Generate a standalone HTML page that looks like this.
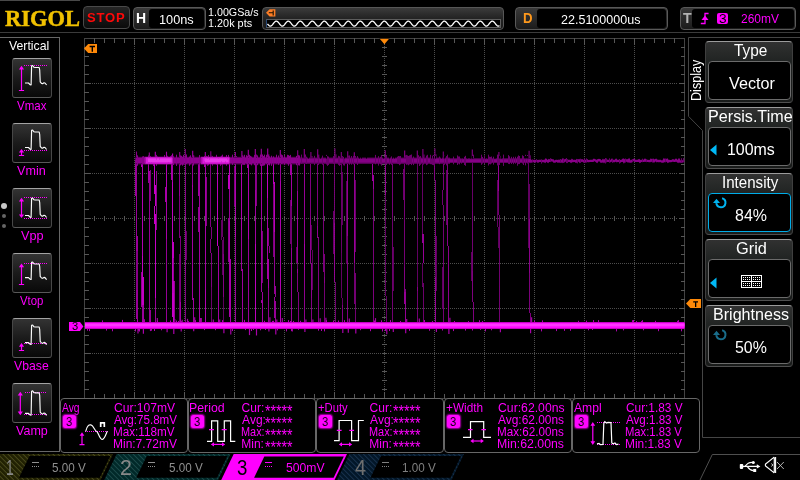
<!DOCTYPE html>
<html><head><meta charset="utf-8"><title>RIGOL</title><style>
html,body{margin:0;padding:0;background:#000;}
body{width:800px;height:480px;overflow:hidden;position:relative;font-family:"Liberation Sans",sans-serif;}
#root{position:absolute;left:0;top:0;width:800px;height:480px;overflow:hidden;will-change:transform;opacity:0.999;}
.a{position:absolute;}
.t{position:absolute;white-space:nowrap;line-height:1;transform-origin:0 0;}
.btn{position:absolute;box-sizing:border-box;border:1px solid #484848;border-top-color:#a4a4a4;border-bottom-color:#5a5a5a;border-radius:3px;background:linear-gradient(#343434,#1c1c1c 50%,#0a0a0a);}
.box{position:absolute;box-sizing:border-box;border:1px solid #5a5a5a;border-radius:4px;background:linear-gradient(#3a3a3a,#1c1c1c);}
.inner{position:absolute;box-sizing:border-box;background:#000;border-radius:3px;}
.mbox{position:absolute;box-sizing:border-box;border:1px solid #686868;border-radius:4px;background:#000;}
.rbtn{position:absolute;box-sizing:border-box;border:1px solid #404040;border-top-color:#9c9c9c;border-bottom-color:#505050;border-radius:4px;background:linear-gradient(#323232 0px,#2a2c2b 9px,#222524 19px,#1a1c1b 100%);}
.rin{position:absolute;box-sizing:border-box;border:1px solid #6c6c6c;border-radius:4px;background:#000;}
</style></head><body>
<div id="root">
<div class="a" style="left:0;top:0;width:80px;height:1px;background:#4a4a4a"></div>
<div class="a" style="left:0;top:32px;width:800px;height:1px;background:#3c3c3c"></div>
<div class="t" style="left:4.65px;top:6px;font-size:24.0px;color:#f2c200;font-weight:bold;font-family:'Liberation Serif',serif;transform:scaleX(0.9361);-webkit-text-stroke:0.5px #f2c200;">RIGOL</div>
<div class="box" style="left:83px;top:6px;width:47px;height:23px;background:linear-gradient(#262626,#0c0c0c);border-color:#4a4a4a"></div>
<div class="t" style="left:87.13px;top:11px;font-size:13.1px;color:#ff0a0a;font-weight:bold;transform:scaleX(0.9977);letter-spacing:0.8px;">STOP</div>
<div class="box" style="left:133px;top:7px;width:73px;height:23px"></div>
<div class="inner" style="left:149px;top:9px;width:55px;height:19px"></div>
<div class="t" style="left:136.06px;top:11px;font-size:14.5px;color:#fff;font-weight:bold;transform:scaleX(0.9623);">H</div>
<div class="t" style="left:159.03px;top:13px;font-size:13.1px;color:#fff;font-weight:normal;transform:scaleX(0.9735);">100ns</div>
<div class="t" style="left:208.19px;top:6px;font-size:11.6px;color:#fff;font-weight:normal;transform:scaleX(0.9248);">1.00GSa/s</div>
<div class="t" style="left:208.18px;top:17px;font-size:11.6px;color:#fff;font-weight:normal;transform:scaleX(0.9368);">1.20k pts</div>
<div class="box" style="left:262px;top:7px;width:242px;height:23px;background:linear-gradient(#3c3c3c,#262626 45%,#1a1a1a);border-color:#585858"></div>
<div class="a" style="left:266px;top:19px;width:235px;height:9px;box-sizing:border-box;background:#000;border:1px solid #5e5e5e;border-left-color:#2a4a78"></div>
<svg class="a" style="left:266px;top:8.5px" width="10" height="8" viewBox="0 0 10 8"><path d="M0 3.8 L3.6 0.3 H9.4 V7.5 H3.6 Z" fill="#ff7f27"/><path d="M2.8 3.8 H7 M7.2 1.4 V6.4" stroke="#1a1000" stroke-width="1.1" fill="none"/></svg>
<svg class="a" style="left:0;top:0" width="800" height="32"><polyline points="267.5,23.86 268.0,24.50 268.5,25.07 269.0,25.54 269.5,25.88 270.0,26.07 270.5,26.09 271.0,25.93 271.5,25.62 272.0,25.17 272.5,24.62 273.0,23.99 273.5,23.34 274.0,22.70 274.5,22.13 275.0,21.66 275.5,21.32 276.0,21.13 276.5,21.11 277.0,21.27 277.5,21.58 278.0,22.03 278.5,22.58 279.0,23.21 279.5,23.86 280.0,24.50 280.5,25.07 281.0,25.54 281.5,25.88 282.0,26.07 282.5,26.09 283.0,25.93 283.5,25.62 284.0,25.17 284.5,24.62 285.0,23.99 285.5,23.34 286.0,22.70 286.5,22.13 287.0,21.66 287.5,21.32 288.0,21.13 288.5,21.11 289.0,21.27 289.5,21.58 290.0,22.03 290.5,22.58 291.0,23.21 291.5,23.86 292.0,24.50 292.5,25.07 293.0,25.54 293.5,25.88 294.0,26.07 294.5,26.09 295.0,25.93 295.5,25.62 296.0,25.17 296.5,24.62 297.0,23.99 297.5,23.34 298.0,22.70 298.5,22.13 299.0,21.66 299.5,21.32 300.0,21.13 300.5,21.11 301.0,21.27 301.5,21.58 302.0,22.03 302.5,22.58 303.0,23.21 303.5,23.86 304.0,24.50 304.5,25.07 305.0,25.54 305.5,25.88 306.0,26.07 306.5,26.09 307.0,25.93 307.5,25.62 308.0,25.17 308.5,24.62 309.0,23.99 309.5,23.34 310.0,22.70 310.5,22.13 311.0,21.66 311.5,21.32 312.0,21.13 312.5,21.11 313.0,21.27 313.5,21.58 314.0,22.03 314.5,22.58 315.0,23.21 315.5,23.86 316.0,24.50 316.5,25.07 317.0,25.54 317.5,25.88 318.0,26.07 318.5,26.09 319.0,25.93 319.5,25.62 320.0,25.17 320.5,24.62 321.0,23.99 321.5,23.34 322.0,22.70 322.5,22.13 323.0,21.66 323.5,21.32 324.0,21.13 324.5,21.11 325.0,21.27 325.5,21.58 326.0,22.03 326.5,22.58 327.0,23.21 327.5,23.86 328.0,24.50 328.5,25.07 329.0,25.54 329.5,25.88 330.0,26.07 330.5,26.09 331.0,25.93 331.5,25.62 332.0,25.17 332.5,24.62 333.0,23.99 333.5,23.34 334.0,22.70 334.5,22.13 335.0,21.66 335.5,21.32 336.0,21.13 336.5,21.11 337.0,21.27 337.5,21.58 338.0,22.03 338.5,22.58 339.0,23.21 339.5,23.86 340.0,24.50 340.5,25.07 341.0,25.54 341.5,25.88 342.0,26.07 342.5,26.09 343.0,25.93 343.5,25.62 344.0,25.17 344.5,24.62 345.0,23.99 345.5,23.34 346.0,22.70 346.5,22.13 347.0,21.66 347.5,21.32 348.0,21.13 348.5,21.11 349.0,21.27 349.5,21.58 350.0,22.03 350.5,22.58 351.0,23.21 351.5,23.86 352.0,24.50 352.5,25.07 353.0,25.54 353.5,25.88 354.0,26.07 354.5,26.09 355.0,25.93 355.5,25.62 356.0,25.17 356.5,24.62 357.0,23.99 357.5,23.34 358.0,22.70 358.5,22.13 359.0,21.66 359.5,21.32 360.0,21.13 360.5,21.11 361.0,21.27 361.5,21.58 362.0,22.03 362.5,22.58 363.0,23.21 363.5,23.86 364.0,24.50 364.5,25.07 365.0,25.54 365.5,25.88 366.0,26.07 366.5,26.09 367.0,25.93 367.5,25.62 368.0,25.17 368.5,24.62 369.0,23.99 369.5,23.34 370.0,22.70 370.5,22.13 371.0,21.66 371.5,21.32 372.0,21.13 372.5,21.11 373.0,21.27 373.5,21.58 374.0,22.03 374.5,22.58 375.0,23.21 375.5,23.86 376.0,24.50 376.5,25.07 377.0,25.54 377.5,25.88 378.0,26.07 378.5,26.09 379.0,25.93 379.5,25.62 380.0,25.17 380.5,24.62 381.0,23.99 381.5,23.34 382.0,22.70 382.5,22.13 383.0,21.66 383.5,21.32 384.0,21.13 384.5,21.11 385.0,21.27 385.5,21.58 386.0,22.03 386.5,22.58 387.0,23.21 387.5,23.86 388.0,24.50 388.5,25.07 389.0,25.54 389.5,25.88 390.0,26.07 390.5,26.09 391.0,25.93 391.5,25.62 392.0,25.17 392.5,24.62 393.0,23.99 393.5,23.34 394.0,22.70 394.5,22.13 395.0,21.66 395.5,21.32 396.0,21.13 396.5,21.11 397.0,21.27 397.5,21.58 398.0,22.03 398.5,22.58 399.0,23.21 399.5,23.86 400.0,24.50 400.5,25.07 401.0,25.54 401.5,25.88 402.0,26.07 402.5,26.09 403.0,25.93 403.5,25.62 404.0,25.17 404.5,24.62 405.0,23.99 405.5,23.34 406.0,22.70 406.5,22.13 407.0,21.66 407.5,21.32 408.0,21.13 408.5,21.11 409.0,21.27 409.5,21.58 410.0,22.03 410.5,22.58 411.0,23.21 411.5,23.86 412.0,24.50 412.5,25.07 413.0,25.54 413.5,25.88 414.0,26.07 414.5,26.09 415.0,25.93 415.5,25.62 416.0,25.17 416.5,24.62 417.0,23.99 417.5,23.34 418.0,22.70 418.5,22.13 419.0,21.66 419.5,21.32 420.0,21.13 420.5,21.11 421.0,21.27 421.5,21.58 422.0,22.03 422.5,22.58 423.0,23.21 423.5,23.86 424.0,24.50 424.5,25.07 425.0,25.54 425.5,25.88 426.0,26.07 426.5,26.09 427.0,25.93 427.5,25.62 428.0,25.17 428.5,24.62 429.0,23.99 429.5,23.34 430.0,22.70 430.5,22.13 431.0,21.66 431.5,21.32 432.0,21.13 432.5,21.11 433.0,21.27 433.5,21.58 434.0,22.03 434.5,22.58 435.0,23.21 435.5,23.86 436.0,24.50 436.5,25.07 437.0,25.54 437.5,25.88 438.0,26.07 438.5,26.09 439.0,25.93 439.5,25.62 440.0,25.17 440.5,24.62 441.0,23.99 441.5,23.34 442.0,22.70 442.5,22.13 443.0,21.66 443.5,21.32 444.0,21.13 444.5,21.11 445.0,21.27 445.5,21.58 446.0,22.03 446.5,22.58 447.0,23.21 447.5,23.86 448.0,24.50 448.5,25.07 449.0,25.54 449.5,25.88 450.0,26.07 450.5,26.09 451.0,25.93 451.5,25.62 452.0,25.17 452.5,24.62 453.0,23.99 453.5,23.34 454.0,22.70 454.5,22.13 455.0,21.66 455.5,21.32 456.0,21.13 456.5,21.11 457.0,21.27 457.5,21.58 458.0,22.03 458.5,22.58 459.0,23.21 459.5,23.86 460.0,24.50 460.5,25.07 461.0,25.54 461.5,25.88 462.0,26.07 462.5,26.09 463.0,25.93 463.5,25.62 464.0,25.17 464.5,24.62 465.0,23.99 465.5,23.34 466.0,22.70 466.5,22.13 467.0,21.66 467.5,21.32 468.0,21.13 468.5,21.11 469.0,21.27 469.5,21.58 470.0,22.03 470.5,22.58 471.0,23.21 471.5,23.86 472.0,24.50 472.5,25.07 473.0,25.54 473.5,25.88 474.0,26.07 474.5,26.09 475.0,25.93 475.5,25.62 476.0,25.17 476.5,24.62 477.0,23.99 477.5,23.34 478.0,22.70 478.5,22.13 479.0,21.66 479.5,21.32 480.0,21.13 480.5,21.11 481.0,21.27 481.5,21.58 482.0,22.03 482.5,22.58 483.0,23.21 483.5,23.86 484.0,24.50 484.5,25.07 485.0,25.54 485.5,25.88 486.0,26.07 486.5,26.09 487.0,25.93 487.5,25.62 488.0,25.17 488.5,24.62 489.0,23.99 489.5,23.34 490.0,22.70 490.5,22.13 491.0,21.66 491.5,21.32 492.0,21.13 492.5,21.11 493.0,21.27 493.5,21.58 494.0,22.03 494.5,22.58 495.0,23.21 495.5,23.86 496.0,24.50 496.5,25.07 497.0,25.54 497.5,25.88 498.0,26.07 498.5,26.09 499.0,25.93 499.5,25.62" fill="none" stroke="#fff" stroke-width="1.3"/></svg>
<div class="box" style="left:515px;top:7px;width:153px;height:23px"></div>
<div class="inner" style="left:537px;top:9px;width:129px;height:19px"></div>
<div class="t" style="left:522.80px;top:11px;font-size:14.5px;color:#ff9a1e;font-weight:bold;transform:scaleX(0.9111);">D</div>
<div class="t" style="left:561.40px;top:13px;font-size:13.1px;color:#fff;font-weight:normal;transform:scaleX(0.9565);">22.5100000us</div>
<div class="box" style="left:680px;top:7px;width:116px;height:23px"></div>
<div class="inner" style="left:692px;top:9px;width:102px;height:19px"></div>
<div class="t" style="left:682.68px;top:11px;font-size:14.5px;color:#b4b4b4;font-weight:bold;transform:scaleX(0.9739);">T</div>
<svg class="a" style="left:700px;top:12px" width="10" height="13" viewBox="0 0 10 13"><path d="M0.8 11.5 H5 V1.5 H8.6" stroke="#ff00ff" stroke-width="1.3" fill="none"/><path d="M1.5 8 L5 3.6 L8.5 8 Z" fill="#ff00ff"/></svg>
<div class="a" style="left:717px;top:13px;width:11px;height:11px;background:#ff00ff;border-radius:2px"></div>
<div class="t" style="left:718.78px;top:12px;font-size:13.1px;color:#000;font-weight:normal;transform:scaleX(1.0420);">3</div>
<div class="t" style="left:741.43px;top:12px;font-size:13.1px;color:#ff00ff;font-weight:normal;transform:scaleX(0.9139);">260mV</div>
<div class="a" style="left:0;top:37px;width:59px;height:413px;border-top:1px solid #686868;border-right:1px solid #686868;border-bottom:1px solid #686868"></div>
<div class="t" style="left:9.00px;top:39px;font-size:13.1px;color:#fff;font-weight:normal;transform:scaleX(0.9367);">Vertical</div>
<div class="btn" style="left:12px;top:58px;width:40px;height:40px"><svg width="38" height="38" viewBox="0 0 38 38" style="position:absolute;left:0;top:0"><path d="M11 6.5 H34" stroke="#ff00ff" stroke-width="1" stroke-dasharray="1 1" fill="none" shape-rendering="crispEdges"/><path d="M12 24 L15.5 24 L17 25.6 L18.1 25.9 L18.6 6.9 L19.6 6.5 L21 8.3 L22 8.5 L26.2 8.5 L26.7 11.0 L27.2 22.8 L28.5 24.4 L29.6 24.7 L31 23.8 L32 24 L33.6 26" stroke="#fff" stroke-width="1.15" fill="none" stroke-linejoin="round"/><path d="M8.5 9 V31.5 M5.9 31.5 H11.1" stroke="#ff00ff" stroke-width="1.2" fill="none"/><path d="M5.9 10.4 L8.5 6.8 L11.1 10.4 Z" fill="#ff00ff"/></svg></div>
<div class="t" style="left:16.60px;top:99px;font-size:13.1px;color:#ff00ff;font-weight:normal;transform:scaleX(0.8793);">Vmax</div>
<div class="btn" style="left:12px;top:123px;width:40px;height:40px"><svg width="38" height="38" viewBox="0 0 38 38" style="position:absolute;left:0;top:0"><path d="M11 26.5 H34" stroke="#ff00ff" stroke-width="1" stroke-dasharray="1 1" fill="none" shape-rendering="crispEdges"/><path d="M12 23.5 L15.5 23.5 L17 25.1 L18.1 25.4 L18.6 6.4 L19.6 6 L21 7.8 L22 8 L26.2 8 L26.7 10.5 L27.2 22.3 L28.5 23.9 L29.6 24.2 L31 23.3 L32 23.5 L33.6 25.5" stroke="#fff" stroke-width="1.15" fill="none" stroke-linejoin="round"/><path d="M8.5 27.2 V31.5 M5.9 31.5 H11.1" stroke="#ff00ff" stroke-width="1.2" fill="none"/><path d="M5.9 28.599999999999998 L8.5 25.0 L11.1 28.599999999999998 Z" fill="#ff00ff"/></svg></div>
<div class="t" style="left:17.00px;top:164px;font-size:13.1px;color:#ff00ff;font-weight:normal;transform:scaleX(0.9632);">Vmin</div>
<div class="btn" style="left:12px;top:188px;width:40px;height:40px"><svg width="38" height="38" viewBox="0 0 38 38" style="position:absolute;left:0;top:0"><path d="M11 8.5 H34" stroke="#ff00ff" stroke-width="1" stroke-dasharray="1 1" fill="none" shape-rendering="crispEdges"/><path d="M11 29.5 H34" stroke="#ff00ff" stroke-width="1" stroke-dasharray="1 1" fill="none" shape-rendering="crispEdges"/><path d="M12 26.5 L15.5 26.5 L17 28.1 L18.1 28.4 L18.6 9.4 L19.6 9 L21 10.8 L22 11 L26.2 11 L26.7 13.5 L27.2 25.3 L28.5 26.9 L29.6 27.2 L31 26.3 L32 26.5 L33.6 28.5" stroke="#fff" stroke-width="1.15" fill="none" stroke-linejoin="round"/><path d="M8.5 11 V26.9" stroke="#ff00ff" stroke-width="1.2" fill="none"/><path d="M5.9 12.4 L8.5 8.8 L11.1 12.4 Z M5.9 25.5 L8.5 29.099999999999998 L11.1 25.5 Z" fill="#ff00ff"/></svg></div>
<div class="t" style="left:20.50px;top:229px;font-size:13.1px;color:#ff00ff;font-weight:normal;transform:scaleX(0.9689);">Vpp</div>
<div class="btn" style="left:12px;top:253px;width:40px;height:40px"><svg width="38" height="38" viewBox="0 0 38 38" style="position:absolute;left:0;top:0"><path d="M11 9.5 H34" stroke="#ff00ff" stroke-width="1" stroke-dasharray="1 1" fill="none" shape-rendering="crispEdges"/><path d="M12 23.6 L15.5 23.6 L17 25.200000000000003 L18.1 25.5 L18.6 8.4 L19.6 8 L21 9.8 L22 10 L26.2 10 L26.7 12.5 L27.2 22.400000000000002 L28.5 24.0 L29.6 24.3 L31 23.400000000000002 L32 23.6 L33.6 25.6" stroke="#fff" stroke-width="1.15" fill="none" stroke-linejoin="round"/><path d="M8.5 11.8 V30.5 M5.9 30.5 H11.1" stroke="#ff00ff" stroke-width="1.2" fill="none"/><path d="M5.9 13.200000000000001 L8.5 9.600000000000001 L11.1 13.200000000000001 Z" fill="#ff00ff"/></svg></div>
<div class="t" style="left:19.50px;top:294px;font-size:13.1px;color:#ff00ff;font-weight:normal;transform:scaleX(0.8696);">Vtop</div>
<div class="btn" style="left:12px;top:318px;width:40px;height:40px"><svg width="38" height="38" viewBox="0 0 38 38" style="position:absolute;left:0;top:0"><path d="M11 24.5 H34" stroke="#ff00ff" stroke-width="1" stroke-dasharray="1 1" fill="none" shape-rendering="crispEdges"/><path d="M12 23.6 L15.5 23.6 L17 25.200000000000003 L18.1 25.5 L18.6 6.4 L19.6 6 L21 7.8 L22 8 L26.2 8 L26.7 10.5 L27.2 22.400000000000002 L28.5 24.0 L29.6 24.3 L31 23.400000000000002 L32 23.6 L33.6 25.6" stroke="#fff" stroke-width="1.15" fill="none" stroke-linejoin="round"/><path d="M8.5 26.3 V31.5 M5.9 31.5 H11.1" stroke="#ff00ff" stroke-width="1.2" fill="none"/><path d="M5.9 27.7 L8.5 24.1 L11.1 27.7 Z" fill="#ff00ff"/></svg></div>
<div class="t" style="left:13.80px;top:359px;font-size:13.1px;color:#ff00ff;font-weight:normal;transform:scaleX(0.9356);">Vbase</div>
<div class="btn" style="left:12px;top:383px;width:40px;height:40px"><svg width="38" height="38" viewBox="0 0 38 38" style="position:absolute;left:0;top:0"><path d="M12 8.5 H33" stroke="#ff00ff" stroke-width="1" stroke-dasharray="1 1" fill="none" shape-rendering="crispEdges"/><path d="M11 30.5 H34" stroke="#ff00ff" stroke-width="1" stroke-dasharray="1 1" fill="none" shape-rendering="crispEdges"/><path d="M12 29.3 L15.5 29.3 L17 30.900000000000002 L18.1 31.2 L18.6 7.200000000000001 L19.6 6.800000000000001 L21 8.600000000000001 L22 8.8 L26.2 8.8 L26.7 11.3 L27.2 28.1 L28.5 29.7 L29.6 30.0 L31 29.1 L32 29.3 L33.6 31.3" stroke="#fff" stroke-width="1.15" fill="none" stroke-linejoin="round"/><path d="M7.3 10 V29" stroke="#ff00ff" stroke-width="1.2" fill="none"/><path d="M4.699999999999999 11.4 L7.3 7.8 L9.9 11.4 Z M4.699999999999999 27.6 L7.3 31.2 L9.9 27.6 Z" fill="#ff00ff"/></svg></div>
<div class="t" style="left:15.50px;top:424px;font-size:13.1px;color:#ff00ff;font-weight:normal;transform:scaleX(0.9575);">Vamp</div>
<div class="a" style="left:1px;top:203px;width:6px;height:6px;border-radius:3px;background:#c8c8c8"></div>
<div class="a" style="left:2px;top:214px;width:4px;height:4px;border-radius:2px;background:#666"></div>
<div class="a" style="left:2px;top:224px;width:4px;height:4px;border-radius:2px;background:#666"></div>
<svg class="a" style="left:0;top:0" width="800" height="480" shape-rendering="crispEdges"><line x1="134.5" y1="46" x2="134.5" y2="392" stroke="#4e4e4e" stroke-width="1" stroke-dasharray="1 1"/><line x1="184.5" y1="46" x2="184.5" y2="392" stroke="#4e4e4e" stroke-width="1" stroke-dasharray="1 1"/><line x1="234.5" y1="46" x2="234.5" y2="392" stroke="#4e4e4e" stroke-width="1" stroke-dasharray="1 1"/><line x1="284.5" y1="46" x2="284.5" y2="392" stroke="#4e4e4e" stroke-width="1" stroke-dasharray="1 1"/><line x1="334.5" y1="46" x2="334.5" y2="392" stroke="#4e4e4e" stroke-width="1" stroke-dasharray="1 1"/><line x1="384.5" y1="46" x2="384.5" y2="392" stroke="#4e4e4e" stroke-width="1" stroke-dasharray="1 1"/><line x1="434.5" y1="46" x2="434.5" y2="392" stroke="#4e4e4e" stroke-width="1" stroke-dasharray="1 1"/><line x1="484.5" y1="46" x2="484.5" y2="392" stroke="#4e4e4e" stroke-width="1" stroke-dasharray="1 1"/><line x1="534.5" y1="46" x2="534.5" y2="392" stroke="#4e4e4e" stroke-width="1" stroke-dasharray="1 1"/><line x1="584.5" y1="46" x2="584.5" y2="392" stroke="#4e4e4e" stroke-width="1" stroke-dasharray="1 1"/><line x1="634.5" y1="46" x2="634.5" y2="392" stroke="#4e4e4e" stroke-width="1" stroke-dasharray="1 1"/><line x1="92" y1="83.5" x2="678" y2="83.5" stroke="#4e4e4e" stroke-width="1" stroke-dasharray="1 1"/><line x1="92" y1="128.5" x2="678" y2="128.5" stroke="#4e4e4e" stroke-width="1" stroke-dasharray="1 1"/><line x1="92" y1="173.5" x2="678" y2="173.5" stroke="#4e4e4e" stroke-width="1" stroke-dasharray="1 1"/><line x1="92" y1="218.5" x2="678" y2="218.5" stroke="#4e4e4e" stroke-width="1" stroke-dasharray="1 1"/><line x1="92" y1="263.5" x2="678" y2="263.5" stroke="#4e4e4e" stroke-width="1" stroke-dasharray="1 1"/><line x1="92" y1="308.5" x2="678" y2="308.5" stroke="#4e4e4e" stroke-width="1" stroke-dasharray="1 1"/><line x1="92" y1="353.5" x2="678" y2="353.5" stroke="#4e4e4e" stroke-width="1" stroke-dasharray="1 1"/><rect x="84.5" y="38.5" width="600" height="360" fill="none" stroke="#444444" stroke-width="1"/><line x1="94.5" y1="38" x2="94.5" y2="43" stroke="#585858"/><line x1="94.5" y1="394" x2="94.5" y2="399" stroke="#585858"/><line x1="94.5" y1="216" x2="94.5" y2="221" stroke="#585858"/><line x1="104.5" y1="38" x2="104.5" y2="43" stroke="#585858"/><line x1="104.5" y1="394" x2="104.5" y2="399" stroke="#585858"/><line x1="104.5" y1="216" x2="104.5" y2="221" stroke="#585858"/><line x1="114.5" y1="38" x2="114.5" y2="43" stroke="#585858"/><line x1="114.5" y1="394" x2="114.5" y2="399" stroke="#585858"/><line x1="114.5" y1="216" x2="114.5" y2="221" stroke="#585858"/><line x1="124.5" y1="38" x2="124.5" y2="43" stroke="#585858"/><line x1="124.5" y1="394" x2="124.5" y2="399" stroke="#585858"/><line x1="124.5" y1="216" x2="124.5" y2="221" stroke="#585858"/><line x1="134.5" y1="38" x2="134.5" y2="45" stroke="#585858"/><line x1="134.5" y1="392" x2="134.5" y2="399" stroke="#585858"/><line x1="134.5" y1="216" x2="134.5" y2="221" stroke="#585858"/><line x1="144.5" y1="38" x2="144.5" y2="43" stroke="#585858"/><line x1="144.5" y1="394" x2="144.5" y2="399" stroke="#585858"/><line x1="144.5" y1="216" x2="144.5" y2="221" stroke="#585858"/><line x1="154.5" y1="38" x2="154.5" y2="43" stroke="#585858"/><line x1="154.5" y1="394" x2="154.5" y2="399" stroke="#585858"/><line x1="154.5" y1="216" x2="154.5" y2="221" stroke="#585858"/><line x1="164.5" y1="38" x2="164.5" y2="43" stroke="#585858"/><line x1="164.5" y1="394" x2="164.5" y2="399" stroke="#585858"/><line x1="164.5" y1="216" x2="164.5" y2="221" stroke="#585858"/><line x1="174.5" y1="38" x2="174.5" y2="43" stroke="#585858"/><line x1="174.5" y1="394" x2="174.5" y2="399" stroke="#585858"/><line x1="174.5" y1="216" x2="174.5" y2="221" stroke="#585858"/><line x1="184.5" y1="38" x2="184.5" y2="45" stroke="#585858"/><line x1="184.5" y1="392" x2="184.5" y2="399" stroke="#585858"/><line x1="184.5" y1="216" x2="184.5" y2="221" stroke="#585858"/><line x1="194.5" y1="38" x2="194.5" y2="43" stroke="#585858"/><line x1="194.5" y1="394" x2="194.5" y2="399" stroke="#585858"/><line x1="194.5" y1="216" x2="194.5" y2="221" stroke="#585858"/><line x1="204.5" y1="38" x2="204.5" y2="43" stroke="#585858"/><line x1="204.5" y1="394" x2="204.5" y2="399" stroke="#585858"/><line x1="204.5" y1="216" x2="204.5" y2="221" stroke="#585858"/><line x1="214.5" y1="38" x2="214.5" y2="43" stroke="#585858"/><line x1="214.5" y1="394" x2="214.5" y2="399" stroke="#585858"/><line x1="214.5" y1="216" x2="214.5" y2="221" stroke="#585858"/><line x1="224.5" y1="38" x2="224.5" y2="43" stroke="#585858"/><line x1="224.5" y1="394" x2="224.5" y2="399" stroke="#585858"/><line x1="224.5" y1="216" x2="224.5" y2="221" stroke="#585858"/><line x1="234.5" y1="38" x2="234.5" y2="45" stroke="#585858"/><line x1="234.5" y1="392" x2="234.5" y2="399" stroke="#585858"/><line x1="234.5" y1="216" x2="234.5" y2="221" stroke="#585858"/><line x1="244.5" y1="38" x2="244.5" y2="43" stroke="#585858"/><line x1="244.5" y1="394" x2="244.5" y2="399" stroke="#585858"/><line x1="244.5" y1="216" x2="244.5" y2="221" stroke="#585858"/><line x1="254.5" y1="38" x2="254.5" y2="43" stroke="#585858"/><line x1="254.5" y1="394" x2="254.5" y2="399" stroke="#585858"/><line x1="254.5" y1="216" x2="254.5" y2="221" stroke="#585858"/><line x1="264.5" y1="38" x2="264.5" y2="43" stroke="#585858"/><line x1="264.5" y1="394" x2="264.5" y2="399" stroke="#585858"/><line x1="264.5" y1="216" x2="264.5" y2="221" stroke="#585858"/><line x1="274.5" y1="38" x2="274.5" y2="43" stroke="#585858"/><line x1="274.5" y1="394" x2="274.5" y2="399" stroke="#585858"/><line x1="274.5" y1="216" x2="274.5" y2="221" stroke="#585858"/><line x1="284.5" y1="38" x2="284.5" y2="45" stroke="#585858"/><line x1="284.5" y1="392" x2="284.5" y2="399" stroke="#585858"/><line x1="284.5" y1="216" x2="284.5" y2="221" stroke="#585858"/><line x1="294.5" y1="38" x2="294.5" y2="43" stroke="#585858"/><line x1="294.5" y1="394" x2="294.5" y2="399" stroke="#585858"/><line x1="294.5" y1="216" x2="294.5" y2="221" stroke="#585858"/><line x1="304.5" y1="38" x2="304.5" y2="43" stroke="#585858"/><line x1="304.5" y1="394" x2="304.5" y2="399" stroke="#585858"/><line x1="304.5" y1="216" x2="304.5" y2="221" stroke="#585858"/><line x1="314.5" y1="38" x2="314.5" y2="43" stroke="#585858"/><line x1="314.5" y1="394" x2="314.5" y2="399" stroke="#585858"/><line x1="314.5" y1="216" x2="314.5" y2="221" stroke="#585858"/><line x1="324.5" y1="38" x2="324.5" y2="43" stroke="#585858"/><line x1="324.5" y1="394" x2="324.5" y2="399" stroke="#585858"/><line x1="324.5" y1="216" x2="324.5" y2="221" stroke="#585858"/><line x1="334.5" y1="38" x2="334.5" y2="45" stroke="#585858"/><line x1="334.5" y1="392" x2="334.5" y2="399" stroke="#585858"/><line x1="334.5" y1="216" x2="334.5" y2="221" stroke="#585858"/><line x1="344.5" y1="38" x2="344.5" y2="43" stroke="#585858"/><line x1="344.5" y1="394" x2="344.5" y2="399" stroke="#585858"/><line x1="344.5" y1="216" x2="344.5" y2="221" stroke="#585858"/><line x1="354.5" y1="38" x2="354.5" y2="43" stroke="#585858"/><line x1="354.5" y1="394" x2="354.5" y2="399" stroke="#585858"/><line x1="354.5" y1="216" x2="354.5" y2="221" stroke="#585858"/><line x1="364.5" y1="38" x2="364.5" y2="43" stroke="#585858"/><line x1="364.5" y1="394" x2="364.5" y2="399" stroke="#585858"/><line x1="364.5" y1="216" x2="364.5" y2="221" stroke="#585858"/><line x1="374.5" y1="38" x2="374.5" y2="43" stroke="#585858"/><line x1="374.5" y1="394" x2="374.5" y2="399" stroke="#585858"/><line x1="374.5" y1="216" x2="374.5" y2="221" stroke="#585858"/><line x1="384.5" y1="38" x2="384.5" y2="45" stroke="#585858"/><line x1="384.5" y1="392" x2="384.5" y2="399" stroke="#585858"/><line x1="384.5" y1="216" x2="384.5" y2="221" stroke="#585858"/><line x1="394.5" y1="38" x2="394.5" y2="43" stroke="#585858"/><line x1="394.5" y1="394" x2="394.5" y2="399" stroke="#585858"/><line x1="394.5" y1="216" x2="394.5" y2="221" stroke="#585858"/><line x1="404.5" y1="38" x2="404.5" y2="43" stroke="#585858"/><line x1="404.5" y1="394" x2="404.5" y2="399" stroke="#585858"/><line x1="404.5" y1="216" x2="404.5" y2="221" stroke="#585858"/><line x1="414.5" y1="38" x2="414.5" y2="43" stroke="#585858"/><line x1="414.5" y1="394" x2="414.5" y2="399" stroke="#585858"/><line x1="414.5" y1="216" x2="414.5" y2="221" stroke="#585858"/><line x1="424.5" y1="38" x2="424.5" y2="43" stroke="#585858"/><line x1="424.5" y1="394" x2="424.5" y2="399" stroke="#585858"/><line x1="424.5" y1="216" x2="424.5" y2="221" stroke="#585858"/><line x1="434.5" y1="38" x2="434.5" y2="45" stroke="#585858"/><line x1="434.5" y1="392" x2="434.5" y2="399" stroke="#585858"/><line x1="434.5" y1="216" x2="434.5" y2="221" stroke="#585858"/><line x1="444.5" y1="38" x2="444.5" y2="43" stroke="#585858"/><line x1="444.5" y1="394" x2="444.5" y2="399" stroke="#585858"/><line x1="444.5" y1="216" x2="444.5" y2="221" stroke="#585858"/><line x1="454.5" y1="38" x2="454.5" y2="43" stroke="#585858"/><line x1="454.5" y1="394" x2="454.5" y2="399" stroke="#585858"/><line x1="454.5" y1="216" x2="454.5" y2="221" stroke="#585858"/><line x1="464.5" y1="38" x2="464.5" y2="43" stroke="#585858"/><line x1="464.5" y1="394" x2="464.5" y2="399" stroke="#585858"/><line x1="464.5" y1="216" x2="464.5" y2="221" stroke="#585858"/><line x1="474.5" y1="38" x2="474.5" y2="43" stroke="#585858"/><line x1="474.5" y1="394" x2="474.5" y2="399" stroke="#585858"/><line x1="474.5" y1="216" x2="474.5" y2="221" stroke="#585858"/><line x1="484.5" y1="38" x2="484.5" y2="45" stroke="#585858"/><line x1="484.5" y1="392" x2="484.5" y2="399" stroke="#585858"/><line x1="484.5" y1="216" x2="484.5" y2="221" stroke="#585858"/><line x1="494.5" y1="38" x2="494.5" y2="43" stroke="#585858"/><line x1="494.5" y1="394" x2="494.5" y2="399" stroke="#585858"/><line x1="494.5" y1="216" x2="494.5" y2="221" stroke="#585858"/><line x1="504.5" y1="38" x2="504.5" y2="43" stroke="#585858"/><line x1="504.5" y1="394" x2="504.5" y2="399" stroke="#585858"/><line x1="504.5" y1="216" x2="504.5" y2="221" stroke="#585858"/><line x1="514.5" y1="38" x2="514.5" y2="43" stroke="#585858"/><line x1="514.5" y1="394" x2="514.5" y2="399" stroke="#585858"/><line x1="514.5" y1="216" x2="514.5" y2="221" stroke="#585858"/><line x1="524.5" y1="38" x2="524.5" y2="43" stroke="#585858"/><line x1="524.5" y1="394" x2="524.5" y2="399" stroke="#585858"/><line x1="524.5" y1="216" x2="524.5" y2="221" stroke="#585858"/><line x1="534.5" y1="38" x2="534.5" y2="45" stroke="#585858"/><line x1="534.5" y1="392" x2="534.5" y2="399" stroke="#585858"/><line x1="534.5" y1="216" x2="534.5" y2="221" stroke="#585858"/><line x1="544.5" y1="38" x2="544.5" y2="43" stroke="#585858"/><line x1="544.5" y1="394" x2="544.5" y2="399" stroke="#585858"/><line x1="544.5" y1="216" x2="544.5" y2="221" stroke="#585858"/><line x1="554.5" y1="38" x2="554.5" y2="43" stroke="#585858"/><line x1="554.5" y1="394" x2="554.5" y2="399" stroke="#585858"/><line x1="554.5" y1="216" x2="554.5" y2="221" stroke="#585858"/><line x1="564.5" y1="38" x2="564.5" y2="43" stroke="#585858"/><line x1="564.5" y1="394" x2="564.5" y2="399" stroke="#585858"/><line x1="564.5" y1="216" x2="564.5" y2="221" stroke="#585858"/><line x1="574.5" y1="38" x2="574.5" y2="43" stroke="#585858"/><line x1="574.5" y1="394" x2="574.5" y2="399" stroke="#585858"/><line x1="574.5" y1="216" x2="574.5" y2="221" stroke="#585858"/><line x1="584.5" y1="38" x2="584.5" y2="45" stroke="#585858"/><line x1="584.5" y1="392" x2="584.5" y2="399" stroke="#585858"/><line x1="584.5" y1="216" x2="584.5" y2="221" stroke="#585858"/><line x1="594.5" y1="38" x2="594.5" y2="43" stroke="#585858"/><line x1="594.5" y1="394" x2="594.5" y2="399" stroke="#585858"/><line x1="594.5" y1="216" x2="594.5" y2="221" stroke="#585858"/><line x1="604.5" y1="38" x2="604.5" y2="43" stroke="#585858"/><line x1="604.5" y1="394" x2="604.5" y2="399" stroke="#585858"/><line x1="604.5" y1="216" x2="604.5" y2="221" stroke="#585858"/><line x1="614.5" y1="38" x2="614.5" y2="43" stroke="#585858"/><line x1="614.5" y1="394" x2="614.5" y2="399" stroke="#585858"/><line x1="614.5" y1="216" x2="614.5" y2="221" stroke="#585858"/><line x1="624.5" y1="38" x2="624.5" y2="43" stroke="#585858"/><line x1="624.5" y1="394" x2="624.5" y2="399" stroke="#585858"/><line x1="624.5" y1="216" x2="624.5" y2="221" stroke="#585858"/><line x1="634.5" y1="38" x2="634.5" y2="45" stroke="#585858"/><line x1="634.5" y1="392" x2="634.5" y2="399" stroke="#585858"/><line x1="634.5" y1="216" x2="634.5" y2="221" stroke="#585858"/><line x1="644.5" y1="38" x2="644.5" y2="43" stroke="#585858"/><line x1="644.5" y1="394" x2="644.5" y2="399" stroke="#585858"/><line x1="644.5" y1="216" x2="644.5" y2="221" stroke="#585858"/><line x1="654.5" y1="38" x2="654.5" y2="43" stroke="#585858"/><line x1="654.5" y1="394" x2="654.5" y2="399" stroke="#585858"/><line x1="654.5" y1="216" x2="654.5" y2="221" stroke="#585858"/><line x1="664.5" y1="38" x2="664.5" y2="43" stroke="#585858"/><line x1="664.5" y1="394" x2="664.5" y2="399" stroke="#585858"/><line x1="664.5" y1="216" x2="664.5" y2="221" stroke="#585858"/><line x1="674.5" y1="38" x2="674.5" y2="43" stroke="#585858"/><line x1="674.5" y1="394" x2="674.5" y2="399" stroke="#585858"/><line x1="674.5" y1="216" x2="674.5" y2="221" stroke="#585858"/><line x1="84" y1="47.5" x2="89" y2="47.5" stroke="#585858"/><line x1="681" y1="47.5" x2="685" y2="47.5" stroke="#585858"/><line x1="382" y1="47.5" x2="387" y2="47.5" stroke="#585858"/><line x1="84" y1="56.5" x2="89" y2="56.5" stroke="#585858"/><line x1="681" y1="56.5" x2="685" y2="56.5" stroke="#585858"/><line x1="382" y1="56.5" x2="387" y2="56.5" stroke="#585858"/><line x1="84" y1="65.5" x2="89" y2="65.5" stroke="#585858"/><line x1="681" y1="65.5" x2="685" y2="65.5" stroke="#585858"/><line x1="382" y1="65.5" x2="387" y2="65.5" stroke="#585858"/><line x1="84" y1="74.5" x2="89" y2="74.5" stroke="#585858"/><line x1="681" y1="74.5" x2="685" y2="74.5" stroke="#585858"/><line x1="382" y1="74.5" x2="387" y2="74.5" stroke="#585858"/><line x1="84" y1="83.5" x2="91" y2="83.5" stroke="#585858"/><line x1="679" y1="83.5" x2="685" y2="83.5" stroke="#585858"/><line x1="382" y1="83.5" x2="387" y2="83.5" stroke="#585858"/><line x1="84" y1="92.5" x2="89" y2="92.5" stroke="#585858"/><line x1="681" y1="92.5" x2="685" y2="92.5" stroke="#585858"/><line x1="382" y1="92.5" x2="387" y2="92.5" stroke="#585858"/><line x1="84" y1="101.5" x2="89" y2="101.5" stroke="#585858"/><line x1="681" y1="101.5" x2="685" y2="101.5" stroke="#585858"/><line x1="382" y1="101.5" x2="387" y2="101.5" stroke="#585858"/><line x1="84" y1="110.5" x2="89" y2="110.5" stroke="#585858"/><line x1="681" y1="110.5" x2="685" y2="110.5" stroke="#585858"/><line x1="382" y1="110.5" x2="387" y2="110.5" stroke="#585858"/><line x1="84" y1="119.5" x2="89" y2="119.5" stroke="#585858"/><line x1="681" y1="119.5" x2="685" y2="119.5" stroke="#585858"/><line x1="382" y1="119.5" x2="387" y2="119.5" stroke="#585858"/><line x1="84" y1="128.5" x2="91" y2="128.5" stroke="#585858"/><line x1="679" y1="128.5" x2="685" y2="128.5" stroke="#585858"/><line x1="382" y1="128.5" x2="387" y2="128.5" stroke="#585858"/><line x1="84" y1="137.5" x2="89" y2="137.5" stroke="#585858"/><line x1="681" y1="137.5" x2="685" y2="137.5" stroke="#585858"/><line x1="382" y1="137.5" x2="387" y2="137.5" stroke="#585858"/><line x1="84" y1="146.5" x2="89" y2="146.5" stroke="#585858"/><line x1="681" y1="146.5" x2="685" y2="146.5" stroke="#585858"/><line x1="382" y1="146.5" x2="387" y2="146.5" stroke="#585858"/><line x1="84" y1="155.5" x2="89" y2="155.5" stroke="#585858"/><line x1="681" y1="155.5" x2="685" y2="155.5" stroke="#585858"/><line x1="382" y1="155.5" x2="387" y2="155.5" stroke="#585858"/><line x1="84" y1="164.5" x2="89" y2="164.5" stroke="#585858"/><line x1="681" y1="164.5" x2="685" y2="164.5" stroke="#585858"/><line x1="382" y1="164.5" x2="387" y2="164.5" stroke="#585858"/><line x1="84" y1="173.5" x2="91" y2="173.5" stroke="#585858"/><line x1="679" y1="173.5" x2="685" y2="173.5" stroke="#585858"/><line x1="382" y1="173.5" x2="387" y2="173.5" stroke="#585858"/><line x1="84" y1="182.5" x2="89" y2="182.5" stroke="#585858"/><line x1="681" y1="182.5" x2="685" y2="182.5" stroke="#585858"/><line x1="382" y1="182.5" x2="387" y2="182.5" stroke="#585858"/><line x1="84" y1="191.5" x2="89" y2="191.5" stroke="#585858"/><line x1="681" y1="191.5" x2="685" y2="191.5" stroke="#585858"/><line x1="382" y1="191.5" x2="387" y2="191.5" stroke="#585858"/><line x1="84" y1="200.5" x2="89" y2="200.5" stroke="#585858"/><line x1="681" y1="200.5" x2="685" y2="200.5" stroke="#585858"/><line x1="382" y1="200.5" x2="387" y2="200.5" stroke="#585858"/><line x1="84" y1="209.5" x2="89" y2="209.5" stroke="#585858"/><line x1="681" y1="209.5" x2="685" y2="209.5" stroke="#585858"/><line x1="382" y1="209.5" x2="387" y2="209.5" stroke="#585858"/><line x1="84" y1="218.5" x2="91" y2="218.5" stroke="#585858"/><line x1="679" y1="218.5" x2="685" y2="218.5" stroke="#585858"/><line x1="382" y1="218.5" x2="387" y2="218.5" stroke="#585858"/><line x1="84" y1="227.5" x2="89" y2="227.5" stroke="#585858"/><line x1="681" y1="227.5" x2="685" y2="227.5" stroke="#585858"/><line x1="382" y1="227.5" x2="387" y2="227.5" stroke="#585858"/><line x1="84" y1="236.5" x2="89" y2="236.5" stroke="#585858"/><line x1="681" y1="236.5" x2="685" y2="236.5" stroke="#585858"/><line x1="382" y1="236.5" x2="387" y2="236.5" stroke="#585858"/><line x1="84" y1="245.5" x2="89" y2="245.5" stroke="#585858"/><line x1="681" y1="245.5" x2="685" y2="245.5" stroke="#585858"/><line x1="382" y1="245.5" x2="387" y2="245.5" stroke="#585858"/><line x1="84" y1="254.5" x2="89" y2="254.5" stroke="#585858"/><line x1="681" y1="254.5" x2="685" y2="254.5" stroke="#585858"/><line x1="382" y1="254.5" x2="387" y2="254.5" stroke="#585858"/><line x1="84" y1="263.5" x2="91" y2="263.5" stroke="#585858"/><line x1="679" y1="263.5" x2="685" y2="263.5" stroke="#585858"/><line x1="382" y1="263.5" x2="387" y2="263.5" stroke="#585858"/><line x1="84" y1="272.5" x2="89" y2="272.5" stroke="#585858"/><line x1="681" y1="272.5" x2="685" y2="272.5" stroke="#585858"/><line x1="382" y1="272.5" x2="387" y2="272.5" stroke="#585858"/><line x1="84" y1="281.5" x2="89" y2="281.5" stroke="#585858"/><line x1="681" y1="281.5" x2="685" y2="281.5" stroke="#585858"/><line x1="382" y1="281.5" x2="387" y2="281.5" stroke="#585858"/><line x1="84" y1="290.5" x2="89" y2="290.5" stroke="#585858"/><line x1="681" y1="290.5" x2="685" y2="290.5" stroke="#585858"/><line x1="382" y1="290.5" x2="387" y2="290.5" stroke="#585858"/><line x1="84" y1="299.5" x2="89" y2="299.5" stroke="#585858"/><line x1="681" y1="299.5" x2="685" y2="299.5" stroke="#585858"/><line x1="382" y1="299.5" x2="387" y2="299.5" stroke="#585858"/><line x1="84" y1="308.5" x2="91" y2="308.5" stroke="#585858"/><line x1="679" y1="308.5" x2="685" y2="308.5" stroke="#585858"/><line x1="382" y1="308.5" x2="387" y2="308.5" stroke="#585858"/><line x1="84" y1="317.5" x2="89" y2="317.5" stroke="#585858"/><line x1="681" y1="317.5" x2="685" y2="317.5" stroke="#585858"/><line x1="382" y1="317.5" x2="387" y2="317.5" stroke="#585858"/><line x1="84" y1="326.5" x2="89" y2="326.5" stroke="#585858"/><line x1="681" y1="326.5" x2="685" y2="326.5" stroke="#585858"/><line x1="382" y1="326.5" x2="387" y2="326.5" stroke="#585858"/><line x1="84" y1="335.5" x2="89" y2="335.5" stroke="#585858"/><line x1="681" y1="335.5" x2="685" y2="335.5" stroke="#585858"/><line x1="382" y1="335.5" x2="387" y2="335.5" stroke="#585858"/><line x1="84" y1="344.5" x2="89" y2="344.5" stroke="#585858"/><line x1="681" y1="344.5" x2="685" y2="344.5" stroke="#585858"/><line x1="382" y1="344.5" x2="387" y2="344.5" stroke="#585858"/><line x1="84" y1="353.5" x2="91" y2="353.5" stroke="#585858"/><line x1="679" y1="353.5" x2="685" y2="353.5" stroke="#585858"/><line x1="382" y1="353.5" x2="387" y2="353.5" stroke="#585858"/><line x1="84" y1="362.5" x2="89" y2="362.5" stroke="#585858"/><line x1="681" y1="362.5" x2="685" y2="362.5" stroke="#585858"/><line x1="382" y1="362.5" x2="387" y2="362.5" stroke="#585858"/><line x1="84" y1="371.5" x2="89" y2="371.5" stroke="#585858"/><line x1="681" y1="371.5" x2="685" y2="371.5" stroke="#585858"/><line x1="382" y1="371.5" x2="387" y2="371.5" stroke="#585858"/><line x1="84" y1="380.5" x2="89" y2="380.5" stroke="#585858"/><line x1="681" y1="380.5" x2="685" y2="380.5" stroke="#585858"/><line x1="382" y1="380.5" x2="387" y2="380.5" stroke="#585858"/><line x1="84" y1="389.5" x2="89" y2="389.5" stroke="#585858"/><line x1="681" y1="389.5" x2="685" y2="389.5" stroke="#585858"/><line x1="382" y1="389.5" x2="387" y2="389.5" stroke="#585858"/></svg>
<svg class="a" style="left:0;top:0" width="800" height="480"><line shape-rendering="crispEdges" x1="135.9" y1="160" x2="136.9" y2="251" stroke="#9c009c" stroke-width="1.56"/><line shape-rendering="crispEdges" x1="136.9" y1="251" x2="137.2" y2="290" stroke="#890089" stroke-width="1.56"/><line shape-rendering="crispEdges" x1="136.9" y1="290" x2="137.5" y2="325" stroke="#990099" stroke-width="1.76"/><line x1="136.5" y1="151.5" x2="136.5" y2="160" stroke="#8b008b" stroke-width="1.1"/><line x1="137.6" y1="155.8" x2="137.6" y2="160" stroke="#7e007e" stroke-width="1"/><line x1="138.0" y1="328" x2="138.0" y2="333.4" stroke="#aa00aa" stroke-width="1.2"/><line shape-rendering="crispEdges" x1="142.2" y1="160" x2="142.7" y2="256" stroke="#b300b3" stroke-width="1.45"/><line shape-rendering="crispEdges" x1="142.7" y1="256" x2="142.9" y2="305" stroke="#c500c5" stroke-width="1.45"/><line shape-rendering="crispEdges" x1="142.9" y1="305" x2="142.9" y2="325" stroke="#9e009e" stroke-width="1.25"/><line shape-rendering="crispEdges" x1="141.8" y1="272" x2="142.1" y2="322" stroke="#980098" stroke-width="1"/><line x1="143.4" y1="328" x2="143.4" y2="333.7" stroke="#aa00aa" stroke-width="1.2"/><line x1="144.4" y1="319.3" x2="144.4" y2="322" stroke="#a400a4" stroke-width="1.2"/><line shape-rendering="crispEdges" x1="148.7" y1="160" x2="149.1" y2="180" stroke="#a900a9" stroke-width="1.21"/><line shape-rendering="crispEdges" x1="149.1" y1="180" x2="149.5" y2="243" stroke="#950095" stroke-width="1.21"/><line shape-rendering="crispEdges" x1="149.5" y1="243" x2="150.0" y2="325" stroke="#930093" stroke-width="1.21"/><line shape-rendering="crispEdges" x1="150.0" y1="168" x2="150.3" y2="201" stroke="#800080" stroke-width="1"/><line x1="149.3" y1="152.4" x2="149.3" y2="160" stroke="#a100a1" stroke-width="1.1"/><line x1="150.4" y1="156.2" x2="150.4" y2="160" stroke="#8f008f" stroke-width="1"/><line x1="150.5" y1="328" x2="150.5" y2="331.1" stroke="#aa00aa" stroke-width="1.2"/><line shape-rendering="crispEdges" x1="154.7" y1="160" x2="155.2" y2="206" stroke="#c800c8" stroke-width="1.09"/><line shape-rendering="crispEdges" x1="154.9" y1="206" x2="155.7" y2="298" stroke="#c800c8" stroke-width="1.09"/><line shape-rendering="crispEdges" x1="155.7" y1="298" x2="155.8" y2="325" stroke="#9b009b" stroke-width="1.29"/><line shape-rendering="crispEdges" x1="156.1" y1="171" x2="156.4" y2="230" stroke="#920092" stroke-width="1"/><line x1="155.3" y1="151.7" x2="155.3" y2="160" stroke="#b100b1" stroke-width="1.1"/><line x1="156.4" y1="155.9" x2="156.4" y2="160" stroke="#9b009b" stroke-width="1"/><line x1="157.3" y1="317.9" x2="157.3" y2="322" stroke="#a400a4" stroke-width="1.2"/><line shape-rendering="crispEdges" x1="166.2" y1="160" x2="166.3" y2="187" stroke="#b700b7" stroke-width="1.21"/><line shape-rendering="crispEdges" x1="166.0" y1="187" x2="166.4" y2="239" stroke="#aa00aa" stroke-width="1.21"/><line shape-rendering="crispEdges" x1="166.4" y1="239" x2="166.6" y2="325" stroke="#960096" stroke-width="1.01"/><line x1="166.5" y1="151.7" x2="166.5" y2="160" stroke="#a600a6" stroke-width="1.1"/><line x1="167.6" y1="155.8" x2="167.6" y2="160" stroke="#930093" stroke-width="1"/><line x1="167.1" y1="328" x2="167.1" y2="332.2" stroke="#aa00aa" stroke-width="1.2"/><line shape-rendering="crispEdges" x1="172.0" y1="160" x2="172.4" y2="182" stroke="#a900a9" stroke-width="1.68"/><line shape-rendering="crispEdges" x1="172.4" y1="182" x2="173.1" y2="293" stroke="#c000c0" stroke-width="1.48"/><line shape-rendering="crispEdges" x1="173.1" y1="293" x2="173.3" y2="325" stroke="#c800c8" stroke-width="1.48"/><line shape-rendering="crispEdges" x1="173.9" y1="258" x2="174.2" y2="320" stroke="#980098" stroke-width="1"/><line x1="172.6" y1="153.6" x2="172.6" y2="160" stroke="#b600b6" stroke-width="1.1"/><line x1="173.7" y1="156.8" x2="173.7" y2="160" stroke="#9f009f" stroke-width="1"/><line x1="173.8" y1="328" x2="173.8" y2="333.9" stroke="#aa00aa" stroke-width="1.2"/><line x1="174.8" y1="318.9" x2="174.8" y2="322" stroke="#a400a4" stroke-width="1.2"/><line shape-rendering="crispEdges" x1="179.4" y1="160" x2="179.7" y2="196" stroke="#930093" stroke-width="1.01"/><line shape-rendering="crispEdges" x1="179.7" y1="196" x2="180.5" y2="302" stroke="#7d007d" stroke-width="1.01"/><line shape-rendering="crispEdges" x1="180.5" y1="302" x2="180.7" y2="325" stroke="#a500a5" stroke-width="1.21"/><line shape-rendering="crispEdges" x1="179.1" y1="254" x2="179.4" y2="325" stroke="#6e006e" stroke-width="1"/><line x1="179.7" y1="151.9" x2="179.7" y2="160" stroke="#900090" stroke-width="1.1"/><line x1="180.8" y1="155.9" x2="180.8" y2="160" stroke="#820082" stroke-width="1"/><line x1="181.2" y1="328" x2="181.2" y2="331.4" stroke="#aa00aa" stroke-width="1.2"/><line x1="182.2" y1="319.7" x2="182.2" y2="322" stroke="#a400a4" stroke-width="1.2"/><line shape-rendering="crispEdges" x1="185.3" y1="160" x2="185.3" y2="210" stroke="#940094" stroke-width="0.94"/><line shape-rendering="crispEdges" x1="185.0" y1="210" x2="185.7" y2="274" stroke="#9a009a" stroke-width="0.94"/><line shape-rendering="crispEdges" x1="185.7" y1="274" x2="186.0" y2="325" stroke="#8a008a" stroke-width="0.94"/><line shape-rendering="crispEdges" x1="186.4" y1="231" x2="186.7" y2="260" stroke="#680068" stroke-width="1"/><line x1="185.3" y1="149.0" x2="185.3" y2="160" stroke="#8b008b" stroke-width="1.1"/><line x1="186.4" y1="154.5" x2="186.4" y2="160" stroke="#7e007e" stroke-width="1"/><line x1="187.5" y1="318.8" x2="187.5" y2="322" stroke="#a400a4" stroke-width="1.2"/><line shape-rendering="crispEdges" x1="192.7" y1="160" x2="192.5" y2="185" stroke="#950095" stroke-width="1.21"/><line shape-rendering="crispEdges" x1="192.5" y1="185" x2="192.5" y2="187" stroke="#aa00aa" stroke-width="1.01"/><line shape-rendering="crispEdges" x1="192.2" y1="187" x2="193.2" y2="325" stroke="#9f009f" stroke-width="1.01"/><line x1="192.7" y1="150.8" x2="192.7" y2="160" stroke="#a600a6" stroke-width="1.1"/><line x1="193.8" y1="155.4" x2="193.8" y2="160" stroke="#930093" stroke-width="1"/><line x1="193.7" y1="328" x2="193.7" y2="331.2" stroke="#aa00aa" stroke-width="1.2"/><line x1="194.7" y1="317.3" x2="194.7" y2="322" stroke="#a400a4" stroke-width="1.2"/><line shape-rendering="crispEdges" x1="198.8" y1="160" x2="198.9" y2="184" stroke="#9f009f" stroke-width="1.48"/><line shape-rendering="crispEdges" x1="199.2" y1="184" x2="199.7" y2="303" stroke="#a100a1" stroke-width="1.48"/><line shape-rendering="crispEdges" x1="199.7" y1="303" x2="199.8" y2="325" stroke="#a500a5" stroke-width="1.48"/><line shape-rendering="crispEdges" x1="198.1" y1="207" x2="198.4" y2="232" stroke="#980098" stroke-width="1"/><line x1="201.3" y1="317.9" x2="201.3" y2="322" stroke="#a400a4" stroke-width="1.2"/><line shape-rendering="crispEdges" x1="205.0" y1="160" x2="205.3" y2="289" stroke="#a800a8" stroke-width="1.01"/><line shape-rendering="crispEdges" x1="205.0" y1="289" x2="205.3" y2="291" stroke="#b000b0" stroke-width="1.01"/><line shape-rendering="crispEdges" x1="205.3" y1="291" x2="205.4" y2="325" stroke="#b100b1" stroke-width="1.01"/><line shape-rendering="crispEdges" x1="206.0" y1="174" x2="206.3" y2="226" stroke="#8c008c" stroke-width="1"/><line x1="205.3" y1="151.9" x2="205.3" y2="160" stroke="#ab00ab" stroke-width="1.1"/><line x1="206.4" y1="155.9" x2="206.4" y2="160" stroke="#970097" stroke-width="1"/><line shape-rendering="crispEdges" x1="210.5" y1="160" x2="211.1" y2="239" stroke="#850085" stroke-width="0.94"/><line shape-rendering="crispEdges" x1="210.8" y1="239" x2="211.5" y2="287" stroke="#880088" stroke-width="0.94"/><line shape-rendering="crispEdges" x1="211.5" y1="287" x2="211.8" y2="325" stroke="#740074" stroke-width="0.94"/><line x1="210.8" y1="151.3" x2="210.8" y2="160" stroke="#860086" stroke-width="1.1"/><line x1="211.9" y1="155.7" x2="211.9" y2="160" stroke="#7a007a" stroke-width="1"/><line x1="213.3" y1="319.6" x2="213.3" y2="322" stroke="#a400a4" stroke-width="1.2"/><line shape-rendering="crispEdges" x1="217.7" y1="160" x2="217.6" y2="201" stroke="#ba00ba" stroke-width="1.29"/><line shape-rendering="crispEdges" x1="217.3" y1="201" x2="217.8" y2="246" stroke="#c400c4" stroke-width="1.09"/><line shape-rendering="crispEdges" x1="218.1" y1="246" x2="218.2" y2="325" stroke="#a300a3" stroke-width="1.09"/><line x1="219.7" y1="319.4" x2="219.7" y2="322" stroke="#a400a4" stroke-width="1.2"/><line shape-rendering="crispEdges" x1="222.6" y1="160" x2="223.1" y2="254" stroke="#790079" stroke-width="0.86"/><line shape-rendering="crispEdges" x1="223.1" y1="254" x2="223.3" y2="297" stroke="#820082" stroke-width="1.06"/><line shape-rendering="crispEdges" x1="223.6" y1="297" x2="223.4" y2="325" stroke="#6b006b" stroke-width="0.86"/><line shape-rendering="crispEdges" x1="221.9" y1="220" x2="222.2" y2="275" stroke="#620062" stroke-width="1"/><line x1="223.9" y1="328" x2="223.9" y2="333.3" stroke="#aa00aa" stroke-width="1.2"/><line shape-rendering="crispEdges" x1="229.3" y1="160" x2="229.2" y2="189" stroke="#c400c4" stroke-width="1.45"/><line shape-rendering="crispEdges" x1="229.5" y1="189" x2="229.5" y2="221" stroke="#9a009a" stroke-width="1.45"/><line shape-rendering="crispEdges" x1="229.5" y1="221" x2="230.3" y2="325" stroke="#ab00ab" stroke-width="1.45"/><line shape-rendering="crispEdges" x1="228.5" y1="218" x2="228.8" y2="262" stroke="#920092" stroke-width="1"/><line x1="230.8" y1="328" x2="230.8" y2="334.5" stroke="#aa00aa" stroke-width="1.2"/><line shape-rendering="crispEdges" x1="235.3" y1="160" x2="235.1" y2="193" stroke="#ae00ae" stroke-width="1.01"/><line shape-rendering="crispEdges" x1="235.1" y1="193" x2="235.2" y2="237" stroke="#b000b0" stroke-width="1.01"/><line shape-rendering="crispEdges" x1="235.2" y1="237" x2="235.4" y2="325" stroke="#990099" stroke-width="1.01"/><line shape-rendering="crispEdges" x1="234.0" y1="164" x2="234.3" y2="206" stroke="#860086" stroke-width="1"/><line x1="235.3" y1="152.1" x2="235.3" y2="160" stroke="#a600a6" stroke-width="1.1"/><line x1="236.4" y1="156.0" x2="236.4" y2="160" stroke="#930093" stroke-width="1"/><line shape-rendering="crispEdges" x1="241.6" y1="160" x2="241.9" y2="230" stroke="#b000b0" stroke-width="1.01"/><line shape-rendering="crispEdges" x1="241.6" y1="230" x2="242.2" y2="288" stroke="#9c009c" stroke-width="1.01"/><line shape-rendering="crispEdges" x1="242.2" y1="288" x2="242.4" y2="325" stroke="#9e009e" stroke-width="1.21"/><line x1="241.9" y1="151.0" x2="241.9" y2="160" stroke="#a100a1" stroke-width="1.1"/><line x1="243.0" y1="155.5" x2="243.0" y2="160" stroke="#8f008f" stroke-width="1"/><line shape-rendering="crispEdges" x1="248.0" y1="160" x2="248.4" y2="221" stroke="#af00af" stroke-width="1.09"/><line shape-rendering="crispEdges" x1="248.4" y1="221" x2="248.5" y2="239" stroke="#b200b2" stroke-width="1.09"/><line shape-rendering="crispEdges" x1="248.2" y1="239" x2="249.0" y2="325" stroke="#990099" stroke-width="1.09"/><line x1="248.3" y1="149.7" x2="248.3" y2="160" stroke="#a600a6" stroke-width="1.1"/><line x1="249.4" y1="154.8" x2="249.4" y2="160" stroke="#930093" stroke-width="1"/><line x1="249.5" y1="328" x2="249.5" y2="335.1" stroke="#aa00aa" stroke-width="1.2"/><line shape-rendering="crispEdges" x1="255.3" y1="160" x2="255.2" y2="190" stroke="#8e008e" stroke-width="1.21"/><line shape-rendering="crispEdges" x1="255.5" y1="190" x2="255.5" y2="244" stroke="#a200a2" stroke-width="1.01"/><line shape-rendering="crispEdges" x1="255.5" y1="244" x2="256.0" y2="325" stroke="#bd00bd" stroke-width="1.01"/><line shape-rendering="crispEdges" x1="256.0" y1="164" x2="256.3" y2="206" stroke="#860086" stroke-width="1"/><line x1="255.3" y1="149.0" x2="255.3" y2="160" stroke="#a600a6" stroke-width="1.1"/><line x1="256.4" y1="154.5" x2="256.4" y2="160" stroke="#930093" stroke-width="1"/><line x1="256.5" y1="328" x2="256.5" y2="335.5" stroke="#aa00aa" stroke-width="1.2"/><line shape-rendering="crispEdges" x1="261.0" y1="160" x2="262.0" y2="292" stroke="#a000a0" stroke-width="1.01"/><line shape-rendering="crispEdges" x1="262.3" y1="292" x2="262.1" y2="301" stroke="#9d009d" stroke-width="1.21"/><line shape-rendering="crispEdges" x1="262.1" y1="301" x2="262.3" y2="325" stroke="#a400a4" stroke-width="1.21"/><line shape-rendering="crispEdges" x1="262.6" y1="231" x2="262.9" y2="283" stroke="#800080" stroke-width="1"/><line x1="261.3" y1="148.7" x2="261.3" y2="160" stroke="#a100a1" stroke-width="1.1"/><line x1="262.4" y1="154.4" x2="262.4" y2="160" stroke="#8f008f" stroke-width="1"/><line shape-rendering="crispEdges" x1="267.7" y1="160" x2="267.6" y2="198" stroke="#c000c0" stroke-width="1.21"/><line shape-rendering="crispEdges" x1="267.3" y1="198" x2="268.2" y2="288" stroke="#a600a6" stroke-width="1.21"/><line shape-rendering="crispEdges" x1="268.2" y1="288" x2="268.4" y2="325" stroke="#920092" stroke-width="1.21"/><line shape-rendering="crispEdges" x1="268.8" y1="228" x2="269.1" y2="253" stroke="#860086" stroke-width="1"/><line x1="267.7" y1="148.6" x2="267.7" y2="160" stroke="#a600a6" stroke-width="1.1"/><line x1="268.8" y1="154.3" x2="268.8" y2="160" stroke="#930093" stroke-width="1"/><line x1="268.9" y1="328" x2="268.9" y2="331.4" stroke="#aa00aa" stroke-width="1.2"/><line x1="269.9" y1="317.2" x2="269.9" y2="322" stroke="#a400a4" stroke-width="1.2"/><line shape-rendering="crispEdges" x1="273.7" y1="160" x2="274.6" y2="232" stroke="#b900b9" stroke-width="1.09"/><line shape-rendering="crispEdges" x1="274.3" y1="232" x2="275.1" y2="297" stroke="#930093" stroke-width="1.09"/><line shape-rendering="crispEdges" x1="274.8" y1="297" x2="275.3" y2="325" stroke="#980098" stroke-width="1.29"/><line shape-rendering="crispEdges" x1="273.2" y1="184" x2="273.5" y2="257" stroke="#800080" stroke-width="1"/><line x1="275.8" y1="328" x2="275.8" y2="334.5" stroke="#aa00aa" stroke-width="1.2"/><line x1="276.8" y1="319.4" x2="276.8" y2="322" stroke="#a400a4" stroke-width="1.2"/><line shape-rendering="crispEdges" x1="280.3" y1="160" x2="280.1" y2="181" stroke="#9b009b" stroke-width="1.01"/><line shape-rendering="crispEdges" x1="280.1" y1="181" x2="280.5" y2="267" stroke="#ad00ad" stroke-width="1.01"/><line shape-rendering="crispEdges" x1="280.5" y1="267" x2="280.8" y2="325" stroke="#b300b3" stroke-width="1.21"/><line x1="280.3" y1="150.1" x2="280.3" y2="160" stroke="#a600a6" stroke-width="1.1"/><line x1="281.4" y1="155.1" x2="281.4" y2="160" stroke="#930093" stroke-width="1"/><line x1="282.3" y1="318.1" x2="282.3" y2="322" stroke="#a400a4" stroke-width="1.2"/><line shape-rendering="crispEdges" x1="291.0" y1="160" x2="291.2" y2="206" stroke="#a200a2" stroke-width="1.11"/><line shape-rendering="crispEdges" x1="291.2" y1="206" x2="291.4" y2="248" stroke="#7f007f" stroke-width="0.91"/><line shape-rendering="crispEdges" x1="291.7" y1="248" x2="291.8" y2="325" stroke="#a500a5" stroke-width="0.91"/><line shape-rendering="crispEdges" x1="290.2" y1="200" x2="290.5" y2="244" stroke="#6e006e" stroke-width="1"/><line x1="292.3" y1="328" x2="292.3" y2="331.4" stroke="#aa00aa" stroke-width="1.2"/><line shape-rendering="crispEdges" x1="297.4" y1="160" x2="297.6" y2="191" stroke="#7c007c" stroke-width="0.84"/><line shape-rendering="crispEdges" x1="297.3" y1="191" x2="297.9" y2="273" stroke="#9a009a" stroke-width="1.04"/><line shape-rendering="crispEdges" x1="297.9" y1="273" x2="298.2" y2="325" stroke="#980098" stroke-width="0.84"/><line shape-rendering="crispEdges" x1="296.8" y1="247" x2="297.1" y2="269" stroke="#680068" stroke-width="1"/><line x1="297.7" y1="150.2" x2="297.7" y2="160" stroke="#8b008b" stroke-width="1.1"/><line x1="298.8" y1="155.1" x2="298.8" y2="160" stroke="#7e007e" stroke-width="1"/><line shape-rendering="crispEdges" x1="304.3" y1="160" x2="304.2" y2="244" stroke="#960096" stroke-width="1.32"/><line shape-rendering="crispEdges" x1="304.2" y1="244" x2="304.3" y2="270" stroke="#a900a9" stroke-width="1.12"/><line shape-rendering="crispEdges" x1="304.3" y1="270" x2="304.4" y2="325" stroke="#8e008e" stroke-width="1.12"/><line x1="304.3" y1="149.0" x2="304.3" y2="160" stroke="#900090" stroke-width="1.1"/><line x1="305.4" y1="154.5" x2="305.4" y2="160" stroke="#820082" stroke-width="1"/><line x1="304.9" y1="328" x2="304.9" y2="331.9" stroke="#aa00aa" stroke-width="1.2"/><line x1="305.9" y1="319.5" x2="305.9" y2="322" stroke="#a400a4" stroke-width="1.2"/><line shape-rendering="crispEdges" x1="310.6" y1="160" x2="310.9" y2="216" stroke="#8c008c" stroke-width="0.91"/><line shape-rendering="crispEdges" x1="310.6" y1="216" x2="311.3" y2="298" stroke="#9b009b" stroke-width="0.91"/><line shape-rendering="crispEdges" x1="311.6" y1="298" x2="311.4" y2="325" stroke="#910091" stroke-width="0.91"/><line shape-rendering="crispEdges" x1="311.9" y1="225" x2="312.2" y2="290" stroke="#620062" stroke-width="1"/><line x1="310.9" y1="151.9" x2="310.9" y2="160" stroke="#860086" stroke-width="1.1"/><line x1="312.0" y1="156.0" x2="312.0" y2="160" stroke="#7a007a" stroke-width="1"/><line x1="312.9" y1="319.4" x2="312.9" y2="322" stroke="#a400a4" stroke-width="1.2"/><line shape-rendering="crispEdges" x1="317.1" y1="160" x2="317.9" y2="226" stroke="#950095" stroke-width="0.84"/><line shape-rendering="crispEdges" x1="317.9" y1="226" x2="318.0" y2="238" stroke="#8e008e" stroke-width="1.04"/><line shape-rendering="crispEdges" x1="318.3" y1="238" x2="318.7" y2="325" stroke="#980098" stroke-width="0.84"/><line x1="317.7" y1="149.3" x2="317.7" y2="160" stroke="#8b008b" stroke-width="1.1"/><line x1="318.8" y1="154.6" x2="318.8" y2="160" stroke="#7e007e" stroke-width="1"/><line x1="320.2" y1="318.2" x2="320.2" y2="322" stroke="#a400a4" stroke-width="1.2"/><line shape-rendering="crispEdges" x1="323.4" y1="160" x2="324.1" y2="277" stroke="#7b007b" stroke-width="1.11"/><line shape-rendering="crispEdges" x1="324.1" y1="277" x2="324.1" y2="283" stroke="#960096" stroke-width="0.91"/><line shape-rendering="crispEdges" x1="324.4" y1="283" x2="324.4" y2="325" stroke="#750075" stroke-width="1.11"/><line x1="325.9" y1="317.8" x2="325.9" y2="322" stroke="#a400a4" stroke-width="1.2"/><line shape-rendering="crispEdges" x1="334.6" y1="160" x2="334.8" y2="223" stroke="#7e007e" stroke-width="0.91"/><line shape-rendering="crispEdges" x1="334.8" y1="223" x2="334.9" y2="282" stroke="#9d009d" stroke-width="0.91"/><line shape-rendering="crispEdges" x1="335.2" y1="282" x2="335.0" y2="325" stroke="#7c007c" stroke-width="0.91"/><line shape-rendering="crispEdges" x1="333.7" y1="211" x2="334.0" y2="254" stroke="#680068" stroke-width="1"/><line x1="334.9" y1="148.5" x2="334.9" y2="160" stroke="#8b008b" stroke-width="1.1"/><line x1="336.0" y1="154.3" x2="336.0" y2="160" stroke="#7e007e" stroke-width="1"/><line shape-rendering="crispEdges" x1="341.0" y1="160" x2="341.7" y2="253" stroke="#690069" stroke-width="1.04"/><line shape-rendering="crispEdges" x1="341.4" y1="253" x2="342.1" y2="305" stroke="#740074" stroke-width="0.84"/><line shape-rendering="crispEdges" x1="342.1" y1="305" x2="342.3" y2="325" stroke="#830083" stroke-width="1.04"/><line shape-rendering="crispEdges" x1="342.1" y1="172" x2="342.4" y2="225" stroke="#620062" stroke-width="1"/><line x1="341.3" y1="152.1" x2="341.3" y2="160" stroke="#860086" stroke-width="1.1"/><line x1="342.4" y1="156.1" x2="342.4" y2="160" stroke="#7a007a" stroke-width="1"/><line x1="342.8" y1="328" x2="342.8" y2="332.9" stroke="#aa00aa" stroke-width="1.2"/><line shape-rendering="crispEdges" x1="347.4" y1="160" x2="347.6" y2="236" stroke="#930093" stroke-width="1.04"/><line shape-rendering="crispEdges" x1="347.6" y1="236" x2="347.6" y2="261" stroke="#880088" stroke-width="0.84"/><line shape-rendering="crispEdges" x1="347.6" y1="261" x2="347.8" y2="325" stroke="#9a009a" stroke-width="0.84"/><line shape-rendering="crispEdges" x1="346.5" y1="181" x2="346.8" y2="264" stroke="#620062" stroke-width="1"/><line x1="347.7" y1="151.3" x2="347.7" y2="160" stroke="#860086" stroke-width="1.1"/><line x1="348.8" y1="155.6" x2="348.8" y2="160" stroke="#7a007a" stroke-width="1"/><line x1="348.3" y1="328" x2="348.3" y2="332.8" stroke="#aa00aa" stroke-width="1.2"/><line x1="349.3" y1="318.4" x2="349.3" y2="322" stroke="#a400a4" stroke-width="1.2"/><line shape-rendering="crispEdges" x1="354.3" y1="160" x2="354.4" y2="214" stroke="#920092" stroke-width="1.25"/><line shape-rendering="crispEdges" x1="354.7" y1="214" x2="354.8" y2="263" stroke="#9a009a" stroke-width="1.05"/><line shape-rendering="crispEdges" x1="354.8" y1="263" x2="355.3" y2="325" stroke="#740074" stroke-width="1.25"/><line shape-rendering="crispEdges" x1="355.2" y1="180" x2="355.5" y2="252" stroke="#6e006e" stroke-width="1"/><line x1="354.3" y1="152.3" x2="354.3" y2="160" stroke="#900090" stroke-width="1.1"/><line x1="355.4" y1="156.1" x2="355.4" y2="160" stroke="#820082" stroke-width="1"/><line x1="355.8" y1="328" x2="355.8" y2="333.6" stroke="#aa00aa" stroke-width="1.2"/><line shape-rendering="crispEdges" x1="372.7" y1="160" x2="373.2" y2="189" stroke="#9e009e" stroke-width="1.11"/><line shape-rendering="crispEdges" x1="373.2" y1="189" x2="373.7" y2="282" stroke="#870087" stroke-width="0.91"/><line shape-rendering="crispEdges" x1="373.4" y1="282" x2="374.0" y2="325" stroke="#8a008a" stroke-width="0.91"/><line x1="375.5" y1="318.1" x2="375.5" y2="322" stroke="#a400a4" stroke-width="1.2"/><line shape-rendering="crispEdges" x1="385.3" y1="160" x2="385.3" y2="195" stroke="#960096" stroke-width="1.11"/><line shape-rendering="crispEdges" x1="385.6" y1="195" x2="385.4" y2="206" stroke="#700070" stroke-width="0.91"/><line shape-rendering="crispEdges" x1="385.1" y1="206" x2="386.3" y2="325" stroke="#6f006f" stroke-width="0.91"/><line x1="385.3" y1="150.2" x2="385.3" y2="160" stroke="#860086" stroke-width="1.1"/><line x1="386.4" y1="155.1" x2="386.4" y2="160" stroke="#7a007a" stroke-width="1"/><line x1="386.8" y1="328" x2="386.8" y2="334.3" stroke="#aa00aa" stroke-width="1.2"/><line shape-rendering="crispEdges" x1="392.0" y1="160" x2="392.3" y2="217" stroke="#8f008f" stroke-width="0.84"/><line shape-rendering="crispEdges" x1="392.6" y1="217" x2="392.7" y2="301" stroke="#6e006e" stroke-width="1.04"/><line shape-rendering="crispEdges" x1="393.0" y1="301" x2="392.8" y2="325" stroke="#890089" stroke-width="0.84"/><line shape-rendering="crispEdges" x1="393.4" y1="247" x2="393.7" y2="291" stroke="#620062" stroke-width="1"/><line x1="393.3" y1="328" x2="393.3" y2="332.1" stroke="#aa00aa" stroke-width="1.2"/><line shape-rendering="crispEdges" x1="404.4" y1="160" x2="404.9" y2="267" stroke="#760076" stroke-width="1.12"/><line shape-rendering="crispEdges" x1="404.6" y1="267" x2="405.0" y2="292" stroke="#820082" stroke-width="1.12"/><line shape-rendering="crispEdges" x1="405.0" y1="292" x2="405.2" y2="325" stroke="#950095" stroke-width="1.12"/><line shape-rendering="crispEdges" x1="403.4" y1="169" x2="403.7" y2="200" stroke="#6e006e" stroke-width="1"/><line x1="404.7" y1="150.5" x2="404.7" y2="160" stroke="#900090" stroke-width="1.1"/><line x1="405.8" y1="155.3" x2="405.8" y2="160" stroke="#820082" stroke-width="1"/><line x1="405.7" y1="328" x2="405.7" y2="333.2" stroke="#aa00aa" stroke-width="1.2"/><line x1="406.7" y1="319.0" x2="406.7" y2="322" stroke="#a400a4" stroke-width="1.2"/><line shape-rendering="crispEdges" x1="417.0" y1="160" x2="417.6" y2="287" stroke="#6c006c" stroke-width="0.91"/><line shape-rendering="crispEdges" x1="417.6" y1="287" x2="417.6" y2="291" stroke="#930093" stroke-width="0.91"/><line shape-rendering="crispEdges" x1="417.9" y1="291" x2="417.8" y2="325" stroke="#7e007e" stroke-width="0.91"/><line x1="417.3" y1="150.4" x2="417.3" y2="160" stroke="#860086" stroke-width="1.1"/><line x1="418.4" y1="155.2" x2="418.4" y2="160" stroke="#7a007a" stroke-width="1"/><line x1="419.3" y1="318.4" x2="419.3" y2="322" stroke="#a400a4" stroke-width="1.2"/><line shape-rendering="crispEdges" x1="422.6" y1="160" x2="423.0" y2="234" stroke="#7b007b" stroke-width="0.84"/><line shape-rendering="crispEdges" x1="423.0" y1="234" x2="423.1" y2="263" stroke="#970097" stroke-width="1.04"/><line shape-rendering="crispEdges" x1="422.8" y1="263" x2="423.4" y2="325" stroke="#6c006c" stroke-width="1.04"/><line shape-rendering="crispEdges" x1="422.1" y1="265" x2="422.4" y2="286" stroke="#620062" stroke-width="1"/><line x1="422.9" y1="149.0" x2="422.9" y2="160" stroke="#860086" stroke-width="1.1"/><line x1="424.0" y1="154.5" x2="424.0" y2="160" stroke="#7a007a" stroke-width="1"/><line shape-rendering="crispEdges" x1="434.9" y1="160" x2="435.5" y2="272" stroke="#8d008d" stroke-width="0.91"/><line shape-rendering="crispEdges" x1="435.8" y1="272" x2="435.5" y2="277" stroke="#730073" stroke-width="0.91"/><line shape-rendering="crispEdges" x1="435.8" y1="277" x2="435.9" y2="325" stroke="#980098" stroke-width="1.11"/><line shape-rendering="crispEdges" x1="436.2" y1="236" x2="436.5" y2="291" stroke="#620062" stroke-width="1"/><line x1="434.9" y1="148.5" x2="434.9" y2="160" stroke="#860086" stroke-width="1.1"/><line x1="436.0" y1="154.3" x2="436.0" y2="160" stroke="#7a007a" stroke-width="1"/><line x1="436.4" y1="328" x2="436.4" y2="332.0" stroke="#aa00aa" stroke-width="1.2"/><line shape-rendering="crispEdges" x1="443.0" y1="160" x2="443.1" y2="190" stroke="#8e008e" stroke-width="0.84"/><line shape-rendering="crispEdges" x1="442.8" y1="190" x2="443.3" y2="226" stroke="#860086" stroke-width="0.84"/><line shape-rendering="crispEdges" x1="443.6" y1="226" x2="443.8" y2="325" stroke="#890089" stroke-width="0.84"/><line shape-rendering="crispEdges" x1="442.5" y1="267" x2="442.8" y2="309" stroke="#620062" stroke-width="1"/><line x1="443.3" y1="151.5" x2="443.3" y2="160" stroke="#800080" stroke-width="1.1"/><line x1="444.4" y1="155.8" x2="444.4" y2="160" stroke="#750075" stroke-width="1"/><line shape-rendering="crispEdges" x1="447.9" y1="160" x2="447.7" y2="187" stroke="#8b008b" stroke-width="0.91"/><line shape-rendering="crispEdges" x1="447.4" y1="187" x2="448.0" y2="246" stroke="#910091" stroke-width="0.91"/><line shape-rendering="crispEdges" x1="448.3" y1="246" x2="448.4" y2="325" stroke="#8d008d" stroke-width="1.11"/><line shape-rendering="crispEdges" x1="446.6" y1="170" x2="446.9" y2="225" stroke="#680068" stroke-width="1"/><line x1="448.9" y1="328" x2="448.9" y2="333.9" stroke="#aa00aa" stroke-width="1.2"/><line x1="449.9" y1="317.8" x2="449.9" y2="322" stroke="#a400a4" stroke-width="1.2"/><line shape-rendering="crispEdges" x1="472.3" y1="160" x2="472.4" y2="211" stroke="#730073" stroke-width="0.91"/><line shape-rendering="crispEdges" x1="472.7" y1="211" x2="472.9" y2="271" stroke="#7d007d" stroke-width="0.91"/><line shape-rendering="crispEdges" x1="472.6" y1="271" x2="473.3" y2="325" stroke="#8c008c" stroke-width="0.91"/><line shape-rendering="crispEdges" x1="471.7" y1="252" x2="472.0" y2="281" stroke="#620062" stroke-width="1"/><line x1="472.3" y1="149.5" x2="472.3" y2="160" stroke="#860086" stroke-width="1.1"/><line x1="473.4" y1="154.7" x2="473.4" y2="160" stroke="#7a007a" stroke-width="1"/><line shape-rendering="crispEdges" x1="498.6" y1="160" x2="498.8" y2="191" stroke="#970097" stroke-width="1.11"/><line shape-rendering="crispEdges" x1="498.8" y1="191" x2="499.6" y2="286" stroke="#7b007b" stroke-width="0.91"/><line shape-rendering="crispEdges" x1="499.3" y1="286" x2="499.9" y2="325" stroke="#7e007e" stroke-width="0.91"/><line shape-rendering="crispEdges" x1="497.8" y1="180" x2="498.1" y2="248" stroke="#620062" stroke-width="1"/><line x1="498.9" y1="151.9" x2="498.9" y2="160" stroke="#860086" stroke-width="1.1"/><line x1="500.0" y1="155.9" x2="500.0" y2="160" stroke="#7a007a" stroke-width="1"/><line x1="500.4" y1="328" x2="500.4" y2="332.2" stroke="#aa00aa" stroke-width="1.2"/><line shape-rendering="crispEdges" x1="528.8" y1="160" x2="529.3" y2="219" stroke="#6e006e" stroke-width="0.91"/><line shape-rendering="crispEdges" x1="529.0" y1="219" x2="529.7" y2="273" stroke="#990099" stroke-width="0.91"/><line shape-rendering="crispEdges" x1="529.7" y1="273" x2="530.1" y2="325" stroke="#870087" stroke-width="0.91"/><line shape-rendering="crispEdges" x1="528.0" y1="183" x2="528.3" y2="248" stroke="#620062" stroke-width="1"/><line x1="529.1" y1="150.7" x2="529.1" y2="160" stroke="#860086" stroke-width="1.1"/><line x1="530.2" y1="155.3" x2="530.2" y2="160" stroke="#7a007a" stroke-width="1"/><line x1="530.6" y1="328" x2="530.6" y2="333.3" stroke="#aa00aa" stroke-width="1.2"/><line x1="531.6" y1="317.3" x2="531.6" y2="322" stroke="#a400a4" stroke-width="1.2"/><rect x="135.5" y="156.8" width="165" height="7.6" fill="#620062"/><rect x="135.5" y="158" width="165" height="5" fill="#900090"/><rect x="300" y="157.5" width="150" height="6.5" fill="#520052"/><rect x="300" y="158.5" width="150" height="4.2" fill="#860086"/><rect x="450" y="158" width="80" height="5" fill="#480048"/><rect x="450" y="159.2" width="80" height="3.2" fill="#860086"/><polyline points="529,160.8 530,160.3 531,161.6 532,160.8 533,161.2 534,160.8 535,161.6 536,160.8 537,160.8 538,161.6 539,160.8 540,160.8 541,160.8 542,160.8 543,161.2 544,160.8 545,161.6 546,159.9 547,160.8 548,161.6 549,160.3 550,160.8 551,159.9 552,160.3 553,160.3 554,161.6 555,161.6 556,160.8 557,160.8 558,161.6 559,160.8 560,161.6 561,160.8 562,161.6 563,159.9 564,161.2 565,160.3 566,159.9 567,161.6 568,160.8 569,160.8 570,160.8 571,161.6 572,160.3 573,161.2 574,160.8 575,160.8 576,161.6 577,160.3 578,160.8 579,160.3 580,161.6 581,160.8 582,160.3 583,160.8 584,161.6 585,161.6 586,160.8 587,160.3 588,161.2 589,161.2 590,160.8 591,160.8 592,160.8 593,160.8 594,159.9 595,160.3 596,160.8 597,161.6 598,160.3 599,159.9 600,160.3 601,161.6 602,161.6 603,160.3 604,161.6 605,160.3 606,159.9 607,160.8 608,160.8 609,160.8 610,161.2 611,160.8 612,159.9 613,160.8 614,161.2 615,160.8 616,159.9 617,161.2 618,160.8 619,160.8 620,161.6 621,160.8 622,160.8 623,159.9 624,161.6 625,160.3 626,160.8 627,160.3 628,161.2 629,159.9 630,161.6 631,161.6 632,160.8 633,160.3 634,159.9 635,160.8 636,160.8 637,160.8 638,160.8 639,160.3 640,161.6 641,160.8 642,160.8 643,160.8 644,160.8 645,159.9 646,160.8 647,160.8 648,160.8 649,161.2 650,161.2 651,159.9 652,160.8 653,159.9 654,161.2 655,160.3 656,159.9 657,161.2 658,160.8 659,161.2 660,160.8 661,161.2 662,161.6 663,161.6 664,159.9 665,161.2 666,160.8 667,159.9 668,161.6 669,160.8 670,161.2 671,161.2 672,160.8 673,160.3 674,160.8 675,160.8 676,159.9 677,160.8 678,161.6 679,159.9 680,161.6 681,161.6 682,161.6 683,161.2 684,160.3" fill="none" stroke="#8a008a" stroke-width="2.3"/><line x1="137.5" y1="155.4" x2="137.5" y2="165.8" stroke="#8c008c" stroke-width="1"/><line x1="142.5" y1="156.5" x2="142.5" y2="164.4" stroke="#8c008c" stroke-width="1"/><line x1="143.5" y1="156.2" x2="143.5" y2="164.2" stroke="#8c008c" stroke-width="1"/><line x1="148.5" y1="155.4" x2="148.5" y2="163.8" stroke="#8c008c" stroke-width="1"/><line x1="150.5" y1="156.5" x2="150.5" y2="163.6" stroke="#8c008c" stroke-width="1"/><line x1="153.5" y1="156.9" x2="153.5" y2="166.0" stroke="#8c008c" stroke-width="1"/><line x1="156.5" y1="154.9" x2="156.5" y2="165.8" stroke="#8c008c" stroke-width="1"/><line x1="157.5" y1="156.5" x2="157.5" y2="163.9" stroke="#8c008c" stroke-width="1"/><line x1="164.5" y1="155.0" x2="164.5" y2="164.1" stroke="#8c008c" stroke-width="1"/><line x1="167.5" y1="156.5" x2="167.5" y2="164.3" stroke="#8c008c" stroke-width="1"/><line x1="170.5" y1="156.2" x2="170.5" y2="164.2" stroke="#8c008c" stroke-width="1"/><line x1="171.5" y1="155.2" x2="171.5" y2="164.1" stroke="#8c008c" stroke-width="1"/><line x1="173.5" y1="156.4" x2="173.5" y2="165.0" stroke="#8c008c" stroke-width="1"/><line x1="176.5" y1="154.7" x2="176.5" y2="166.0" stroke="#8c008c" stroke-width="1"/><line x1="180.5" y1="155.4" x2="180.5" y2="165.4" stroke="#8c008c" stroke-width="1"/><line x1="181.5" y1="155.8" x2="181.5" y2="164.5" stroke="#8c008c" stroke-width="1"/><line x1="182.5" y1="156.8" x2="182.5" y2="165.7" stroke="#8c008c" stroke-width="1"/><line x1="183.5" y1="154.8" x2="183.5" y2="164.6" stroke="#8c008c" stroke-width="1"/><line x1="185.5" y1="155.6" x2="185.5" y2="164.9" stroke="#8c008c" stroke-width="1"/><line x1="186.5" y1="154.7" x2="186.5" y2="163.9" stroke="#8c008c" stroke-width="1"/><line x1="189.5" y1="156.6" x2="189.5" y2="165.8" stroke="#8c008c" stroke-width="1"/><line x1="190.5" y1="155.3" x2="190.5" y2="164.4" stroke="#8c008c" stroke-width="1"/><line x1="193.5" y1="155.5" x2="193.5" y2="165.5" stroke="#8c008c" stroke-width="1"/><line x1="199.5" y1="155.1" x2="199.5" y2="165.6" stroke="#8c008c" stroke-width="1"/><line x1="204.5" y1="156.0" x2="204.5" y2="163.6" stroke="#8c008c" stroke-width="1"/><line x1="206.5" y1="156.0" x2="206.5" y2="164.3" stroke="#8c008c" stroke-width="1"/><line x1="207.5" y1="156.4" x2="207.5" y2="165.8" stroke="#8c008c" stroke-width="1"/><line x1="208.5" y1="155.0" x2="208.5" y2="165.3" stroke="#8c008c" stroke-width="1"/><line x1="212.5" y1="156.1" x2="212.5" y2="165.7" stroke="#8c008c" stroke-width="1"/><line x1="216.5" y1="154.8" x2="216.5" y2="164.7" stroke="#8c008c" stroke-width="1"/><line x1="220.5" y1="156.7" x2="220.5" y2="165.8" stroke="#8c008c" stroke-width="1"/><line x1="221.5" y1="155.7" x2="221.5" y2="164.6" stroke="#8c008c" stroke-width="1"/><line x1="222.5" y1="154.7" x2="222.5" y2="164.2" stroke="#8c008c" stroke-width="1"/><line x1="226.5" y1="155.0" x2="226.5" y2="165.7" stroke="#8c008c" stroke-width="1"/><line x1="228.5" y1="154.9" x2="228.5" y2="164.1" stroke="#8c008c" stroke-width="1"/><line x1="232.5" y1="154.7" x2="232.5" y2="164.9" stroke="#8c008c" stroke-width="1"/><line x1="242.5" y1="155.4" x2="242.5" y2="164.6" stroke="#8c008c" stroke-width="1"/><line x1="243.5" y1="156.8" x2="243.5" y2="164.8" stroke="#8c008c" stroke-width="1"/><line x1="244.5" y1="154.8" x2="244.5" y2="164.9" stroke="#8c008c" stroke-width="1"/><line x1="246.5" y1="155.2" x2="246.5" y2="163.6" stroke="#8c008c" stroke-width="1"/><line x1="247.5" y1="155.9" x2="247.5" y2="164.6" stroke="#8c008c" stroke-width="1"/><line x1="249.5" y1="155.3" x2="249.5" y2="164.1" stroke="#8c008c" stroke-width="1"/><line x1="250.5" y1="155.9" x2="250.5" y2="164.3" stroke="#8c008c" stroke-width="1"/><line x1="251.5" y1="156.6" x2="251.5" y2="165.4" stroke="#8c008c" stroke-width="1"/><line x1="254.5" y1="154.9" x2="254.5" y2="165.2" stroke="#8c008c" stroke-width="1"/><line x1="255.5" y1="156.2" x2="255.5" y2="165.6" stroke="#8c008c" stroke-width="1"/><line x1="257.5" y1="155.4" x2="257.5" y2="165.2" stroke="#8c008c" stroke-width="1"/><line x1="260.5" y1="154.6" x2="260.5" y2="165.9" stroke="#8c008c" stroke-width="1"/><line x1="262.5" y1="155.0" x2="262.5" y2="165.9" stroke="#8c008c" stroke-width="1"/><line x1="263.5" y1="155.9" x2="263.5" y2="165.7" stroke="#8c008c" stroke-width="1"/><line x1="264.5" y1="154.6" x2="264.5" y2="165.4" stroke="#8c008c" stroke-width="1"/><line x1="266.5" y1="154.8" x2="266.5" y2="163.8" stroke="#8c008c" stroke-width="1"/><line x1="268.5" y1="155.2" x2="268.5" y2="164.8" stroke="#8c008c" stroke-width="1"/><line x1="269.5" y1="156.3" x2="269.5" y2="165.5" stroke="#8c008c" stroke-width="1"/><line x1="271.5" y1="155.7" x2="271.5" y2="165.9" stroke="#8c008c" stroke-width="1"/><line x1="273.5" y1="156.4" x2="273.5" y2="163.8" stroke="#8c008c" stroke-width="1"/><line x1="276.5" y1="154.7" x2="276.5" y2="163.7" stroke="#8c008c" stroke-width="1"/><line x1="278.5" y1="155.5" x2="278.5" y2="164.8" stroke="#8c008c" stroke-width="1"/><line x1="281.5" y1="154.5" x2="281.5" y2="164.0" stroke="#8c008c" stroke-width="1"/><line x1="282.5" y1="155.2" x2="282.5" y2="163.6" stroke="#8c008c" stroke-width="1"/><line x1="284.5" y1="154.8" x2="284.5" y2="165.1" stroke="#8c008c" stroke-width="1"/><line x1="287.5" y1="154.8" x2="287.5" y2="163.7" stroke="#8c008c" stroke-width="1"/><line x1="288.5" y1="155.1" x2="288.5" y2="165.8" stroke="#8c008c" stroke-width="1"/><line x1="289.5" y1="155.8" x2="289.5" y2="163.6" stroke="#8c008c" stroke-width="1"/><line x1="290.5" y1="154.9" x2="290.5" y2="165.1" stroke="#8c008c" stroke-width="1"/><line x1="296.5" y1="155.9" x2="296.5" y2="165.2" stroke="#8c008c" stroke-width="1"/><line x1="298.5" y1="155.2" x2="298.5" y2="165.3" stroke="#8c008c" stroke-width="1"/><line x1="299.5" y1="155.6" x2="299.5" y2="165.6" stroke="#8c008c" stroke-width="1"/><line x1="301.5" y1="154.6" x2="301.5" y2="163.6" stroke="#6e006e" stroke-width="1"/><line x1="306.5" y1="156.7" x2="306.5" y2="163.9" stroke="#6e006e" stroke-width="1"/><line x1="308.5" y1="156" x2="308.5" y2="158.5" stroke="#000" stroke-width="1"/><line x1="314.5" y1="155.8" x2="314.5" y2="165.1" stroke="#6e006e" stroke-width="1"/><line x1="318.5" y1="155.1" x2="318.5" y2="165.0" stroke="#6e006e" stroke-width="1"/><line x1="320.5" y1="156" x2="320.5" y2="158.5" stroke="#000" stroke-width="1"/><line x1="322.5" y1="155.6" x2="322.5" y2="164.7" stroke="#6e006e" stroke-width="1"/><line x1="326.5" y1="154.9" x2="326.5" y2="164.5" stroke="#6e006e" stroke-width="1"/><line x1="326.5" y1="156" x2="326.5" y2="158.5" stroke="#000" stroke-width="1"/><line x1="327.5" y1="156.2" x2="327.5" y2="165.9" stroke="#6e006e" stroke-width="1"/><line x1="328.5" y1="156.6" x2="328.5" y2="165.0" stroke="#6e006e" stroke-width="1"/><line x1="333.5" y1="156.1" x2="333.5" y2="163.6" stroke="#6e006e" stroke-width="1"/><line x1="334.5" y1="155.0" x2="334.5" y2="165.5" stroke="#6e006e" stroke-width="1"/><line x1="338.5" y1="155.8" x2="338.5" y2="164.9" stroke="#6e006e" stroke-width="1"/><line x1="339.5" y1="156.3" x2="339.5" y2="165.9" stroke="#6e006e" stroke-width="1"/><line x1="343.5" y1="156.9" x2="343.5" y2="165.3" stroke="#6e006e" stroke-width="1"/><line x1="344.5" y1="156.4" x2="344.5" y2="165.6" stroke="#6e006e" stroke-width="1"/><line x1="344.5" y1="156" x2="344.5" y2="158.5" stroke="#000" stroke-width="1"/><line x1="349.5" y1="155.5" x2="349.5" y2="164.7" stroke="#6e006e" stroke-width="1"/><line x1="351.5" y1="156.0" x2="351.5" y2="164.7" stroke="#6e006e" stroke-width="1"/><line x1="353.5" y1="155.9" x2="353.5" y2="164.4" stroke="#6e006e" stroke-width="1"/><line x1="357.5" y1="156.1" x2="357.5" y2="165.0" stroke="#6e006e" stroke-width="1"/><line x1="359.5" y1="156" x2="359.5" y2="158.5" stroke="#000" stroke-width="1"/><line x1="361.5" y1="156" x2="361.5" y2="158.5" stroke="#000" stroke-width="1"/><line x1="366.5" y1="156" x2="366.5" y2="158.5" stroke="#000" stroke-width="1"/><line x1="375.5" y1="154.9" x2="375.5" y2="164.3" stroke="#6e006e" stroke-width="1"/><line x1="378.5" y1="156.1" x2="378.5" y2="165.6" stroke="#6e006e" stroke-width="1"/><line x1="380.5" y1="156.9" x2="380.5" y2="164.3" stroke="#6e006e" stroke-width="1"/><line x1="381.5" y1="155.0" x2="381.5" y2="165.7" stroke="#6e006e" stroke-width="1"/><line x1="383.5" y1="156" x2="383.5" y2="158.5" stroke="#000" stroke-width="1"/><line x1="385.5" y1="156.9" x2="385.5" y2="164.9" stroke="#6e006e" stroke-width="1"/><line x1="386.5" y1="156.8" x2="386.5" y2="164.7" stroke="#6e006e" stroke-width="1"/><line x1="389.5" y1="155.8" x2="389.5" y2="164.7" stroke="#6e006e" stroke-width="1"/><line x1="389.5" y1="156" x2="389.5" y2="158.5" stroke="#000" stroke-width="1"/><line x1="391.5" y1="156.4" x2="391.5" y2="164.8" stroke="#6e006e" stroke-width="1"/><line x1="392.5" y1="156" x2="392.5" y2="158.5" stroke="#000" stroke-width="1"/><line x1="394.5" y1="156" x2="394.5" y2="158.5" stroke="#000" stroke-width="1"/><line x1="397.5" y1="156.7" x2="397.5" y2="163.5" stroke="#6e006e" stroke-width="1"/><line x1="398.5" y1="156.0" x2="398.5" y2="163.9" stroke="#6e006e" stroke-width="1"/><line x1="399.5" y1="156.2" x2="399.5" y2="165.2" stroke="#6e006e" stroke-width="1"/><line x1="400.5" y1="156.0" x2="400.5" y2="164.4" stroke="#6e006e" stroke-width="1"/><line x1="406.5" y1="154.9" x2="406.5" y2="164.8" stroke="#6e006e" stroke-width="1"/><line x1="407.5" y1="155.4" x2="407.5" y2="164.5" stroke="#6e006e" stroke-width="1"/><line x1="408.5" y1="156.0" x2="408.5" y2="165.3" stroke="#6e006e" stroke-width="1"/><line x1="409.5" y1="155.4" x2="409.5" y2="164.4" stroke="#6e006e" stroke-width="1"/><line x1="410.5" y1="154.9" x2="410.5" y2="164.0" stroke="#6e006e" stroke-width="1"/><line x1="411.5" y1="154.5" x2="411.5" y2="165.1" stroke="#6e006e" stroke-width="1"/><line x1="413.5" y1="156.5" x2="413.5" y2="165.1" stroke="#6e006e" stroke-width="1"/><line x1="417.5" y1="156.3" x2="417.5" y2="164.1" stroke="#6e006e" stroke-width="1"/><line x1="419.5" y1="156.6" x2="419.5" y2="166.0" stroke="#6e006e" stroke-width="1"/><line x1="420.5" y1="156.1" x2="420.5" y2="164.8" stroke="#6e006e" stroke-width="1"/><line x1="423.5" y1="156.8" x2="423.5" y2="164.6" stroke="#6e006e" stroke-width="1"/><line x1="426.5" y1="155.6" x2="426.5" y2="165.2" stroke="#6e006e" stroke-width="1"/><line x1="427.5" y1="154.8" x2="427.5" y2="164.6" stroke="#6e006e" stroke-width="1"/><line x1="430.5" y1="154.8" x2="430.5" y2="164.2" stroke="#6e006e" stroke-width="1"/><line x1="431.5" y1="156.0" x2="431.5" y2="164.3" stroke="#6e006e" stroke-width="1"/><line x1="431.5" y1="156" x2="431.5" y2="158.5" stroke="#000" stroke-width="1"/><line x1="432.5" y1="155.6" x2="432.5" y2="164.9" stroke="#6e006e" stroke-width="1"/><line x1="433.5" y1="155.1" x2="433.5" y2="165.2" stroke="#6e006e" stroke-width="1"/><line x1="433.5" y1="156" x2="433.5" y2="158.5" stroke="#000" stroke-width="1"/><line x1="434.5" y1="156.7" x2="434.5" y2="165.5" stroke="#6e006e" stroke-width="1"/><line x1="435.5" y1="156" x2="435.5" y2="158.5" stroke="#000" stroke-width="1"/><line x1="439.5" y1="156.5" x2="439.5" y2="164.2" stroke="#6e006e" stroke-width="1"/><line x1="441.5" y1="156" x2="441.5" y2="158.5" stroke="#000" stroke-width="1"/><line x1="444.5" y1="156.9" x2="444.5" y2="164.9" stroke="#6e006e" stroke-width="1"/><line x1="444.5" y1="156" x2="444.5" y2="158.5" stroke="#000" stroke-width="1"/><line x1="446.5" y1="156.1" x2="446.5" y2="165.4" stroke="#6e006e" stroke-width="1"/><line x1="447.5" y1="154.7" x2="447.5" y2="164.7" stroke="#6e006e" stroke-width="1"/><line x1="453.5" y1="156.6" x2="453.5" y2="164.3" stroke="#6e006e" stroke-width="1"/><line x1="457.5" y1="155.4" x2="457.5" y2="165.0" stroke="#6e006e" stroke-width="1"/><line x1="458.5" y1="156.5" x2="458.5" y2="163.6" stroke="#6e006e" stroke-width="1"/><line x1="459.5" y1="156.5" x2="459.5" y2="164.4" stroke="#6e006e" stroke-width="1"/><line x1="461.5" y1="156.0" x2="461.5" y2="163.6" stroke="#6e006e" stroke-width="1"/><line x1="461.5" y1="156" x2="461.5" y2="158.5" stroke="#000" stroke-width="1"/><line x1="463.5" y1="156" x2="463.5" y2="158.5" stroke="#000" stroke-width="1"/><line x1="464.5" y1="156.8" x2="464.5" y2="165.0" stroke="#6e006e" stroke-width="1"/><line x1="465.5" y1="155.8" x2="465.5" y2="165.8" stroke="#6e006e" stroke-width="1"/><line x1="467.5" y1="156" x2="467.5" y2="158.5" stroke="#000" stroke-width="1"/><line x1="470.5" y1="156" x2="470.5" y2="158.5" stroke="#000" stroke-width="1"/><line x1="472.5" y1="156" x2="472.5" y2="158.5" stroke="#000" stroke-width="1"/><line x1="481.5" y1="154.7" x2="481.5" y2="164.8" stroke="#6e006e" stroke-width="1"/><line x1="482.5" y1="156.9" x2="482.5" y2="163.6" stroke="#6e006e" stroke-width="1"/><line x1="484.5" y1="155.4" x2="484.5" y2="164.0" stroke="#6e006e" stroke-width="1"/><line x1="485.5" y1="156" x2="485.5" y2="158.5" stroke="#000" stroke-width="1"/><line x1="487.5" y1="156" x2="487.5" y2="158.5" stroke="#000" stroke-width="1"/><line x1="488.5" y1="154.7" x2="488.5" y2="165.5" stroke="#6e006e" stroke-width="1"/><line x1="489.5" y1="156.7" x2="489.5" y2="164.1" stroke="#6e006e" stroke-width="1"/><line x1="490.5" y1="156.9" x2="490.5" y2="164.4" stroke="#6e006e" stroke-width="1"/><line x1="491.5" y1="156.5" x2="491.5" y2="163.5" stroke="#6e006e" stroke-width="1"/><line x1="493.5" y1="156.7" x2="493.5" y2="164.6" stroke="#6e006e" stroke-width="1"/><line x1="494.5" y1="156" x2="494.5" y2="158.5" stroke="#000" stroke-width="1"/><line x1="495.5" y1="156" x2="495.5" y2="158.5" stroke="#000" stroke-width="1"/><line x1="497.5" y1="154.6" x2="497.5" y2="165.5" stroke="#6e006e" stroke-width="1"/><line x1="498.5" y1="154.7" x2="498.5" y2="165.9" stroke="#6e006e" stroke-width="1"/><line x1="499.5" y1="156.0" x2="499.5" y2="165.0" stroke="#6e006e" stroke-width="1"/><line x1="499.5" y1="156" x2="499.5" y2="158.5" stroke="#000" stroke-width="1"/><line x1="501.5" y1="156" x2="501.5" y2="158.5" stroke="#000" stroke-width="1"/><line x1="503.5" y1="154.6" x2="503.5" y2="165.9" stroke="#6e006e" stroke-width="1"/><line x1="508.5" y1="155.1" x2="508.5" y2="163.9" stroke="#6e006e" stroke-width="1"/><line x1="509.5" y1="156.3" x2="509.5" y2="164.1" stroke="#6e006e" stroke-width="1"/><line x1="511.5" y1="156.8" x2="511.5" y2="164.0" stroke="#6e006e" stroke-width="1"/><line x1="513.5" y1="156.8" x2="513.5" y2="164.2" stroke="#6e006e" stroke-width="1"/><line x1="515.5" y1="156.7" x2="515.5" y2="163.7" stroke="#6e006e" stroke-width="1"/><line x1="517.5" y1="156.7" x2="517.5" y2="165.7" stroke="#6e006e" stroke-width="1"/><line x1="518.5" y1="155.4" x2="518.5" y2="164.1" stroke="#6e006e" stroke-width="1"/><line x1="519.5" y1="156.0" x2="519.5" y2="164.1" stroke="#6e006e" stroke-width="1"/><line x1="522.5" y1="155.3" x2="522.5" y2="163.5" stroke="#6e006e" stroke-width="1"/><line x1="523.5" y1="156.1" x2="523.5" y2="165.0" stroke="#6e006e" stroke-width="1"/><line x1="525.5" y1="154.8" x2="525.5" y2="165.4" stroke="#6e006e" stroke-width="1"/><line x1="525.5" y1="156" x2="525.5" y2="158.5" stroke="#000" stroke-width="1"/><line x1="527.5" y1="155.0" x2="527.5" y2="163.5" stroke="#6e006e" stroke-width="1"/><line x1="527.5" y1="156" x2="527.5" y2="158.5" stroke="#000" stroke-width="1"/><line x1="532.5" y1="159.5" x2="532.5" y2="162.3" stroke="#6a006a" stroke-width="1"/><line x1="536.5" y1="159.2" x2="536.5" y2="162.0" stroke="#6a006a" stroke-width="1"/><line x1="541.5" y1="159.5" x2="541.5" y2="163.6" stroke="#6a006a" stroke-width="1"/><line x1="550.5" y1="158.3" x2="550.5" y2="162.0" stroke="#6a006a" stroke-width="1"/><line x1="560.5" y1="159.0" x2="560.5" y2="162.6" stroke="#6a006a" stroke-width="1"/><line x1="563.5" y1="158.9" x2="563.5" y2="162.9" stroke="#6a006a" stroke-width="1"/><line x1="566.5" y1="158.0" x2="566.5" y2="162.9" stroke="#6a006a" stroke-width="1"/><line x1="567.5" y1="159.2" x2="567.5" y2="163.1" stroke="#6a006a" stroke-width="1"/><line x1="577.5" y1="159.4" x2="577.5" y2="163.4" stroke="#6a006a" stroke-width="1"/><line x1="580.5" y1="158.7" x2="580.5" y2="162.3" stroke="#6a006a" stroke-width="1"/><line x1="584.5" y1="158.3" x2="584.5" y2="162.4" stroke="#6a006a" stroke-width="1"/><line x1="586.5" y1="158.4" x2="586.5" y2="162.6" stroke="#6a006a" stroke-width="1"/><line x1="605.5" y1="158.0" x2="605.5" y2="163.5" stroke="#6a006a" stroke-width="1"/><line x1="606.5" y1="158.6" x2="606.5" y2="162.4" stroke="#6a006a" stroke-width="1"/><line x1="609.5" y1="158.3" x2="609.5" y2="162.6" stroke="#6a006a" stroke-width="1"/><line x1="612.5" y1="159.1" x2="612.5" y2="162.8" stroke="#6a006a" stroke-width="1"/><line x1="619.5" y1="159.0" x2="619.5" y2="163.5" stroke="#6a006a" stroke-width="1"/><line x1="625.5" y1="158.5" x2="625.5" y2="162.6" stroke="#6a006a" stroke-width="1"/><line x1="632.5" y1="159.3" x2="632.5" y2="162.2" stroke="#6a006a" stroke-width="1"/><line x1="642.5" y1="158.7" x2="642.5" y2="162.2" stroke="#6a006a" stroke-width="1"/><line x1="646.5" y1="159.4" x2="646.5" y2="162.2" stroke="#6a006a" stroke-width="1"/><line x1="652.5" y1="159.4" x2="652.5" y2="162.5" stroke="#6a006a" stroke-width="1"/><line x1="665.5" y1="158.5" x2="665.5" y2="162.2" stroke="#6a006a" stroke-width="1"/><line x1="681.5" y1="158.2" x2="681.5" y2="162.2" stroke="#6a006a" stroke-width="1"/><line x1="683.5" y1="158.1" x2="683.5" y2="162.2" stroke="#6a006a" stroke-width="1"/><rect x="144.5" y="156.8" width="28.0" height="7.4" fill="#b00cb0"/><rect x="146" y="157.5" width="26.5" height="6" fill="#dc1cdc"/><rect x="148" y="158.5" width="23.5" height="3.5" fill="#ea3cea"/><rect x="148" y="162.5" width="1" height="1" fill="#c818c8"/><rect x="149" y="162.5" width="1" height="1" fill="#c818c8"/><rect x="151" y="162.5" width="1" height="1" fill="#c818c8"/><rect x="156" y="158.5" width="1" height="1" fill="#c818c8"/><rect x="159" y="158.5" width="1" height="1" fill="#c818c8"/><rect x="168" y="162.5" width="1" height="1" fill="#c818c8"/><rect x="201.0" y="156.8" width="28.5" height="7.4" fill="#b00cb0"/><rect x="202.5" y="157.5" width="27.0" height="6" fill="#dc1cdc"/><rect x="204.5" y="158.5" width="24.0" height="3.5" fill="#ea3cea"/><rect x="204" y="161.5" width="1" height="1" fill="#c818c8"/><rect x="207" y="157.5" width="1" height="1" fill="#c818c8"/><rect x="209" y="158.5" width="1" height="1" fill="#c818c8"/><rect x="218" y="157.5" width="1" height="1" fill="#c818c8"/><rect x="221" y="161.5" width="1" height="1" fill="#c818c8"/><rect x="225" y="161.5" width="1" height="1" fill="#c818c8"/><rect x="227" y="158.5" width="1" height="1" fill="#c818c8"/><rect x="85" y="322" width="599.5" height="7" fill="#c800c8"/><rect x="85" y="323" width="599.5" height="5" fill="#ff08ff"/><rect x="85" y="323.6" width="599.5" height="2.8" fill="#ff38ff"/><line x1="87.5" y1="329" x2="87.5" y2="330.7" stroke="#b000b0" stroke-width="1"/><line x1="89.5" y1="329" x2="89.5" y2="331.1" stroke="#b000b0" stroke-width="1"/><line x1="102.5" y1="320.4" x2="102.5" y2="322" stroke="#b000b0" stroke-width="1"/><line x1="106.5" y1="329" x2="106.5" y2="330.6" stroke="#b000b0" stroke-width="1"/><line x1="112.5" y1="329" x2="112.5" y2="331.3" stroke="#b000b0" stroke-width="1"/><line x1="122.5" y1="319.9" x2="122.5" y2="322" stroke="#b000b0" stroke-width="1"/><line x1="135.5" y1="329" x2="135.5" y2="331.4" stroke="#b000b0" stroke-width="1"/><line x1="137.5" y1="319.9" x2="137.5" y2="322" stroke="#b000b0" stroke-width="1"/><line x1="138.5" y1="329" x2="138.5" y2="330.8" stroke="#b000b0" stroke-width="1"/><line x1="139.5" y1="329" x2="139.5" y2="331.5" stroke="#b000b0" stroke-width="1"/><line x1="142.5" y1="320.3" x2="142.5" y2="322" stroke="#b000b0" stroke-width="1"/><line x1="143.5" y1="321.2" x2="143.5" y2="322" stroke="#b000b0" stroke-width="1"/><line x1="150.5" y1="320.5" x2="150.5" y2="322" stroke="#b000b0" stroke-width="1"/><line x1="151.5" y1="329" x2="151.5" y2="330.7" stroke="#b000b0" stroke-width="1"/><line x1="154.5" y1="329" x2="154.5" y2="331.0" stroke="#b000b0" stroke-width="1"/><line x1="157.5" y1="320.5" x2="157.5" y2="322" stroke="#b000b0" stroke-width="1"/><line x1="161.5" y1="329" x2="161.5" y2="330.3" stroke="#b000b0" stroke-width="1"/><line x1="170.5" y1="320.5" x2="170.5" y2="322" stroke="#b000b0" stroke-width="1"/><line x1="176.5" y1="320.5" x2="176.5" y2="322" stroke="#b000b0" stroke-width="1"/><line x1="178.5" y1="321.0" x2="178.5" y2="322" stroke="#b000b0" stroke-width="1"/><line x1="181.5" y1="321.2" x2="181.5" y2="322" stroke="#b000b0" stroke-width="1"/><line x1="188.5" y1="321.1" x2="188.5" y2="322" stroke="#b000b0" stroke-width="1"/><line x1="195.5" y1="320.1" x2="195.5" y2="322" stroke="#b000b0" stroke-width="1"/><line x1="204.5" y1="329" x2="204.5" y2="330.1" stroke="#b000b0" stroke-width="1"/><line x1="215.5" y1="329" x2="215.5" y2="330.2" stroke="#b000b0" stroke-width="1"/><line x1="222.5" y1="320.1" x2="222.5" y2="322" stroke="#b000b0" stroke-width="1"/><line x1="232.5" y1="329" x2="232.5" y2="331.1" stroke="#b000b0" stroke-width="1"/><line x1="242.5" y1="320.5" x2="242.5" y2="322" stroke="#b000b0" stroke-width="1"/><line x1="244.5" y1="319.9" x2="244.5" y2="322" stroke="#b000b0" stroke-width="1"/><line x1="245.5" y1="329" x2="245.5" y2="330.1" stroke="#b000b0" stroke-width="1"/><line x1="251.5" y1="329" x2="251.5" y2="331.0" stroke="#b000b0" stroke-width="1"/><line x1="253.5" y1="329" x2="253.5" y2="330.0" stroke="#b000b0" stroke-width="1"/><line x1="260.5" y1="329" x2="260.5" y2="330.3" stroke="#b000b0" stroke-width="1"/><line x1="262.5" y1="320.9" x2="262.5" y2="322" stroke="#b000b0" stroke-width="1"/><line x1="264.5" y1="320.8" x2="264.5" y2="322" stroke="#b000b0" stroke-width="1"/><line x1="265.5" y1="329" x2="265.5" y2="330.0" stroke="#b000b0" stroke-width="1"/><line x1="272.5" y1="320.9" x2="272.5" y2="322" stroke="#b000b0" stroke-width="1"/><line x1="273.5" y1="320.8" x2="273.5" y2="322" stroke="#b000b0" stroke-width="1"/><line x1="277.5" y1="329" x2="277.5" y2="330.4" stroke="#b000b0" stroke-width="1"/><line x1="286.5" y1="329" x2="286.5" y2="331.4" stroke="#b000b0" stroke-width="1"/><line x1="288.5" y1="320.1" x2="288.5" y2="322" stroke="#b000b0" stroke-width="1"/><line x1="290.5" y1="321.0" x2="290.5" y2="322" stroke="#b000b0" stroke-width="1"/><line x1="291.5" y1="329" x2="291.5" y2="331.1" stroke="#b000b0" stroke-width="1"/><line x1="293.5" y1="320.9" x2="293.5" y2="322" stroke="#b000b0" stroke-width="1"/><line x1="298.5" y1="329" x2="298.5" y2="329.8" stroke="#b000b0" stroke-width="1"/><line x1="300.5" y1="320.8" x2="300.5" y2="322" stroke="#b000b0" stroke-width="1"/><line x1="318.5" y1="329" x2="318.5" y2="330.7" stroke="#b000b0" stroke-width="1"/><line x1="321.5" y1="329" x2="321.5" y2="331.0" stroke="#b000b0" stroke-width="1"/><line x1="324.5" y1="329" x2="324.5" y2="331.4" stroke="#b000b0" stroke-width="1"/><line x1="326.5" y1="320.2" x2="326.5" y2="322" stroke="#b000b0" stroke-width="1"/><line x1="333.5" y1="320.5" x2="333.5" y2="322" stroke="#b000b0" stroke-width="1"/><line x1="338.5" y1="320.5" x2="338.5" y2="322" stroke="#b000b0" stroke-width="1"/><line x1="344.5" y1="320.1" x2="344.5" y2="322" stroke="#b000b0" stroke-width="1"/><line x1="360.5" y1="329" x2="360.5" y2="330.2" stroke="#b000b0" stroke-width="1"/><line x1="370.5" y1="329" x2="370.5" y2="331.2" stroke="#b000b0" stroke-width="1"/><line x1="374.5" y1="320.5" x2="374.5" y2="322" stroke="#b000b0" stroke-width="1"/><line x1="381.5" y1="320.3" x2="381.5" y2="322" stroke="#b000b0" stroke-width="1"/><line x1="382.5" y1="329" x2="382.5" y2="331.5" stroke="#b000b0" stroke-width="1"/><line x1="385.5" y1="329" x2="385.5" y2="331.0" stroke="#b000b0" stroke-width="1"/><line x1="389.5" y1="329" x2="389.5" y2="331.0" stroke="#b000b0" stroke-width="1"/><line x1="390.5" y1="320.0" x2="390.5" y2="322" stroke="#b000b0" stroke-width="1"/><line x1="400.5" y1="321.0" x2="400.5" y2="322" stroke="#b000b0" stroke-width="1"/><line x1="409.5" y1="329" x2="409.5" y2="330.9" stroke="#b000b0" stroke-width="1"/><line x1="424.5" y1="320.0" x2="424.5" y2="322" stroke="#b000b0" stroke-width="1"/><line x1="429.5" y1="329" x2="429.5" y2="330.8" stroke="#b000b0" stroke-width="1"/><line x1="432.5" y1="321.1" x2="432.5" y2="322" stroke="#b000b0" stroke-width="1"/><line x1="442.5" y1="329" x2="442.5" y2="330.5" stroke="#b000b0" stroke-width="1"/><line x1="453.5" y1="329" x2="453.5" y2="331.1" stroke="#b000b0" stroke-width="1"/><line x1="454.5" y1="321.0" x2="454.5" y2="322" stroke="#b000b0" stroke-width="1"/><line x1="465.5" y1="329" x2="465.5" y2="330.6" stroke="#b000b0" stroke-width="1"/><line x1="468.5" y1="321.1" x2="468.5" y2="322" stroke="#b000b0" stroke-width="1"/><line x1="472.5" y1="329" x2="472.5" y2="330.5" stroke="#b000b0" stroke-width="1"/><line x1="479.5" y1="320.2" x2="479.5" y2="322" stroke="#b000b0" stroke-width="1"/><line x1="480.5" y1="329" x2="480.5" y2="329.9" stroke="#b000b0" stroke-width="1"/><line x1="482.5" y1="321.1" x2="482.5" y2="322" stroke="#b000b0" stroke-width="1"/><line x1="485.5" y1="329" x2="485.5" y2="331.4" stroke="#b000b0" stroke-width="1"/><line x1="491.5" y1="329" x2="491.5" y2="330.3" stroke="#b000b0" stroke-width="1"/><line x1="534.5" y1="320.6" x2="534.5" y2="322" stroke="#b000b0" stroke-width="1"/><line x1="541.5" y1="329" x2="541.5" y2="331.4" stroke="#b000b0" stroke-width="1"/><line x1="542.5" y1="320.4" x2="542.5" y2="322" stroke="#b000b0" stroke-width="1"/><line x1="556.5" y1="329" x2="556.5" y2="331.1" stroke="#b000b0" stroke-width="1"/><line x1="564.5" y1="329" x2="564.5" y2="330.9" stroke="#b000b0" stroke-width="1"/><line x1="570.5" y1="329" x2="570.5" y2="330.8" stroke="#b000b0" stroke-width="1"/><line x1="578.5" y1="320.8" x2="578.5" y2="322" stroke="#b000b0" stroke-width="1"/><line x1="586.5" y1="320.7" x2="586.5" y2="322" stroke="#b000b0" stroke-width="1"/><line x1="588.5" y1="329" x2="588.5" y2="330.3" stroke="#b000b0" stroke-width="1"/><line x1="592.5" y1="329" x2="592.5" y2="330.0" stroke="#b000b0" stroke-width="1"/><line x1="593.5" y1="320.1" x2="593.5" y2="322" stroke="#b000b0" stroke-width="1"/><line x1="598.5" y1="320.1" x2="598.5" y2="322" stroke="#b000b0" stroke-width="1"/><line x1="616.5" y1="329" x2="616.5" y2="331.4" stroke="#b000b0" stroke-width="1"/><line x1="623.5" y1="329" x2="623.5" y2="330.4" stroke="#b000b0" stroke-width="1"/><line x1="632.5" y1="320.2" x2="632.5" y2="322" stroke="#b000b0" stroke-width="1"/><line x1="633.5" y1="320.0" x2="633.5" y2="322" stroke="#b000b0" stroke-width="1"/><line x1="636.5" y1="321.1" x2="636.5" y2="322" stroke="#b000b0" stroke-width="1"/><line x1="641.5" y1="321.1" x2="641.5" y2="322" stroke="#b000b0" stroke-width="1"/><line x1="642.5" y1="320.2" x2="642.5" y2="322" stroke="#b000b0" stroke-width="1"/><line x1="643.5" y1="329" x2="643.5" y2="330.3" stroke="#b000b0" stroke-width="1"/><line x1="655.5" y1="320.8" x2="655.5" y2="322" stroke="#b000b0" stroke-width="1"/><line x1="658.5" y1="329" x2="658.5" y2="331.2" stroke="#b000b0" stroke-width="1"/><line x1="677.5" y1="320.8" x2="677.5" y2="322" stroke="#b000b0" stroke-width="1"/><line x1="678.5" y1="320.1" x2="678.5" y2="322" stroke="#b000b0" stroke-width="1"/><line x1="681.5" y1="329" x2="681.5" y2="331.3" stroke="#b000b0" stroke-width="1"/></svg>
<svg class="a" style="left:84px;top:44px" width="14" height="9" viewBox="0 0 14 9"><path d="M0 4.5 L4.2 0 H13 V9 H4.2 Z" fill="#ff8a0a"/><path d="M5.6 2.5 H11 M8.3 2.5 V7.7" stroke="#000" stroke-width="1.4" fill="none"/></svg>
<svg class="a" style="left:379px;top:38px" width="11" height="7" viewBox="0 0 11 7"><rect x="0.6" y="0" width="9.6" height="0.9" fill="#050a14"/><path d="M0.7 0.8 H10.1 L5.4 6.3 Z" fill="#ff8a0a"/></svg>
<svg class="a" style="left:686px;top:299px" width="16" height="9" viewBox="0 0 16 9"><path d="M0 4.5 L4.3 0 H15 V9 H4.3 Z" fill="#ff8a0a"/><path d="M7.2 2.9 H12 M9.65 2.9 V7.9" stroke="#000" stroke-width="1.3" fill="none"/></svg>
<svg class="a" style="left:69px;top:322px" width="15" height="9" viewBox="0 0 15 9"><path d="M0 0 H11 L14.4 4.5 L11 9 H0 Z" fill="#ff00ff"/></svg>
<div class="t" style="left:71.59px;top:322px;font-size:10.2px;color:#000;font-weight:normal;transform:scaleX(1.0925);">3</div>
<svg class="a" style="left:0;top:0" width="800" height="480"><path d="M800 37.5 H688.5 V116.3 L702.5 130.5 V437.5 H800" fill="none" stroke="#464646" stroke-width="1"/></svg>
<div class="t" style="left:688.5px;top:100.9px;font-size:14.5px;color:#fff;transform:rotate(-90deg) scaleX(0.868);transform-origin:0 0;">Display</div>
<div class="rbtn" style="left:705px;top:41px;width:88px;height:62px"></div>
<div class="rin" style="left:708px;top:61px;width:83px;height:39px"></div>
<div class="t" style="left:734.47px;top:42px;font-size:17.4px;color:#fff;font-weight:normal;transform:scaleX(0.8861);">Type</div>
<div class="t" style="left:728.60px;top:75px;font-size:17.4px;color:#fff;font-weight:normal;transform:scaleX(0.9293);">Vector</div>
<div class="rbtn" style="left:705px;top:107px;width:88px;height:62px"></div>
<div class="rin" style="left:708px;top:127px;width:83px;height:39px"></div>
<div class="t" style="left:708.22px;top:108px;font-size:17.4px;color:#fff;font-weight:normal;transform:scaleX(0.9290);">Persis.Time</div>
<div class="t" style="left:727.15px;top:141px;font-size:17.4px;color:#fff;font-weight:normal;transform:scaleX(0.9158);">100ms</div>
<div class="rbtn" style="left:705px;top:173px;width:88px;height:62px"></div>
<div class="rin" style="left:708px;top:193px;width:83px;height:39px;border:1.5px solid #00aeea"></div>
<div class="t" style="left:721.70px;top:174px;font-size:17.4px;color:#fff;font-weight:normal;transform:scaleX(0.8683);">Intensity</div>
<div class="t" style="left:734.81px;top:207px;font-size:17.4px;color:#fff;font-weight:normal;transform:scaleX(0.9181);">84%</div>
<div class="rbtn" style="left:705px;top:239px;width:88px;height:62px"></div>
<div class="rin" style="left:708px;top:259px;width:83px;height:39px"></div>
<div class="t" style="left:735.59px;top:240px;font-size:17.4px;color:#fff;font-weight:normal;transform:scaleX(0.9406);">Grid</div>
<div class="rbtn" style="left:705px;top:305px;width:88px;height:62px"></div>
<div class="rin" style="left:708px;top:325px;width:83px;height:39px"></div>
<div class="t" style="left:712.53px;top:306px;font-size:17.4px;color:#fff;font-weight:normal;transform:scaleX(0.9247);">Brightness</div>
<div class="t" style="left:734.93px;top:339px;font-size:17.4px;color:#fff;font-weight:normal;transform:scaleX(0.9147);">50%</div>
<svg class="a" style="left:710px;top:144.3px" width="7" height="12" viewBox="0 0 7 12"><path d="M0 6 L6.5 0.5 V11.5 Z" fill="#00baf8"/></svg>
<svg class="a" style="left:710px;top:276.6px" width="7" height="12" viewBox="0 0 7 12"><path d="M0 6 L6.5 0.5 V11.5 Z" fill="#00baf8"/></svg>
<svg class="a" style="left:712px;top:196px" width="16" height="14" viewBox="0 0 16 14"><path d="M10.1 2.2 A4.6 4.6 0 1 1 4.3 7.2" fill="none" stroke="#00b4f0" stroke-width="2"/><path d="M1 6.9 L4.5 2.7 L8 6.9 Z" fill="#00b4f0"/></svg>
<svg class="a" style="left:712px;top:328px" width="16" height="14" viewBox="0 0 16 14"><path d="M10.1 2.2 A4.6 4.6 0 1 1 4.3 7.2" fill="none" stroke="#1a6e8c" stroke-width="2"/><path d="M1 6.9 L4.5 2.7 L8 6.9 Z" fill="#1a6e8c"/></svg>
<svg class="a" style="left:741px;top:275px" width="21" height="13" viewBox="0 0 21 13" shape-rendering="crispEdges"><rect x="0.5" y="0.5" width="20" height="12" fill="none" stroke="#fff"/><line x1="10.5" y1="0" x2="10.5" y2="13" stroke="#fff" stroke-width="1"/><line x1="0" y1="6.5" x2="21" y2="6.5" stroke="#fff" stroke-width="1"/><rect x="2" y="2" width="1" height="1" fill="#fff"/><rect x="4" y="2" width="1" height="1" fill="#fff"/><rect x="6" y="2" width="1" height="1" fill="#fff"/><rect x="8" y="2" width="1" height="1" fill="#fff"/><rect x="12" y="2" width="1" height="1" fill="#fff"/><rect x="14" y="2" width="1" height="1" fill="#fff"/><rect x="16" y="2" width="1" height="1" fill="#fff"/><rect x="18" y="2" width="1" height="1" fill="#fff"/><rect x="2" y="4" width="1" height="1" fill="#fff"/><rect x="4" y="4" width="1" height="1" fill="#fff"/><rect x="6" y="4" width="1" height="1" fill="#fff"/><rect x="8" y="4" width="1" height="1" fill="#fff"/><rect x="12" y="4" width="1" height="1" fill="#fff"/><rect x="14" y="4" width="1" height="1" fill="#fff"/><rect x="16" y="4" width="1" height="1" fill="#fff"/><rect x="18" y="4" width="1" height="1" fill="#fff"/><rect x="2" y="8" width="1" height="1" fill="#fff"/><rect x="4" y="8" width="1" height="1" fill="#fff"/><rect x="6" y="8" width="1" height="1" fill="#fff"/><rect x="8" y="8" width="1" height="1" fill="#fff"/><rect x="12" y="8" width="1" height="1" fill="#fff"/><rect x="14" y="8" width="1" height="1" fill="#fff"/><rect x="16" y="8" width="1" height="1" fill="#fff"/><rect x="18" y="8" width="1" height="1" fill="#fff"/><rect x="2" y="10" width="1" height="1" fill="#fff"/><rect x="4" y="10" width="1" height="1" fill="#fff"/><rect x="6" y="10" width="1" height="1" fill="#fff"/><rect x="8" y="10" width="1" height="1" fill="#fff"/><rect x="12" y="10" width="1" height="1" fill="#fff"/><rect x="14" y="10" width="1" height="1" fill="#fff"/><rect x="16" y="10" width="1" height="1" fill="#fff"/><rect x="18" y="10" width="1" height="1" fill="#fff"/></svg>
<div class="mbox" style="left:60px;top:398px;width:128px;height:55px"></div>
<svg class="a" style="left:60px;top:398px" width="128" height="55" viewBox="60 398 128 55"><path d="M85 431.5 H108" stroke="#ff00ff" stroke-width="1" stroke-dasharray="1 1" fill="none"/><path d="M85.7 431.3 C87.5 424.5,89.5 424.5,91 424.9 C93.5 425.5,95 431.3,96.5 431.3 C98 431.3,99.5 439.3,102 439.5 C104.5 439.6,106 434,107.2 431.3" stroke="#fff" stroke-width="1.2" fill="none"/><path d="M82 434.5 V444.6 M79.5 444.6 H84.5" stroke="#ff00ff" stroke-width="1.2" fill="none"/><path d="M79.6 435.8 L82 432.3 L84.4 435.8 Z" fill="#ff00ff"/><path d="M100.7 427 V422.8 H104.3 V427" stroke="#fff" stroke-width="1.7" fill="none"/></svg>
<div class="t" style="left:62.10px;top:401px;font-size:13.1px;color:#ff00ff;font-weight:normal;transform:scaleX(0.7876);">Avg</div>
<div class="a" style="left:63.2px;top:415.4px;width:12.8px;height:12.2px;border-radius:2.5px;background:#ff06ff;box-shadow:0 0 1.6px 1px #a800a8"></div>
<div class="t" style="left:66.47px;top:415px;font-size:13.1px;color:#160016;font-weight:normal;transform:scaleX(0.8656);">3</div>
<div class="t" style="left:113.60px;top:402px;font-size:12px;color:#ff00ff;font-weight:normal;transform:scaleX(1.0075);">Cur:107mV</div>
<div class="t" style="left:114.10px;top:414px;font-size:12px;color:#ff00ff;font-weight:normal;transform:scaleX(0.9674);">Avg:75.8mV</div>
<div class="t" style="left:113.25px;top:426px;font-size:12px;color:#ff00ff;font-weight:normal;transform:scaleX(0.9751);">Max:118mV</div>
<div class="t" style="left:113.23px;top:438px;font-size:12px;color:#ff00ff;font-weight:normal;transform:scaleX(0.9980);">Min:7.72mV</div>
<div class="mbox" style="left:188px;top:398px;width:128px;height:55px"></div>
<svg class="a" style="left:188px;top:398px" width="128" height="55" viewBox="188 398 128 55"><path d="M207 441.4 H211.6 V420.8 H217.7 V441.4 H224.3 V420.8 H230.6 V441.4 H235.3" stroke="#fff" stroke-width="1.2" fill="none"/><path d="M209 429.6 H214 M221.7 429.6 H226.7" stroke="#ff00ff" stroke-width="1.2" fill="none"/><path d="M212.5 444.4 H223.5" stroke="#ff00ff" stroke-width="1.2" fill="none"/><path d="M210.8 444.4 L214 442.2 V446.6 Z M225.2 444.4 L222 442.2 V446.6 Z" fill="#ff00ff"/></svg>
<div class="t" style="left:189.16px;top:401px;font-size:13.1px;color:#ff00ff;font-weight:normal;transform:scaleX(0.9402);">Period</div>
<div class="a" style="left:191.2px;top:415.4px;width:12.8px;height:12.2px;border-radius:2.5px;background:#ff06ff;box-shadow:0 0 1.6px 1px #a800a8"></div>
<div class="t" style="left:194.47px;top:415px;font-size:13.1px;color:#160016;font-weight:normal;transform:scaleX(0.8656);">3</div>
<div class="t" style="left:241.60px;top:402px;font-size:12px;color:#ff00ff;font-weight:normal;">Cur:</div>
<div class="t" style="left:264.97px;top:404px;font-size:15.7px;color:#ff00ff;font-weight:normal;transform:scaleX(0.9054);">*****</div>
<div class="t" style="left:242.10px;top:414px;font-size:12px;color:#ff00ff;font-weight:normal;">Avg:</div>
<div class="t" style="left:264.97px;top:416px;font-size:15.7px;color:#ff00ff;font-weight:normal;transform:scaleX(0.9054);">*****</div>
<div class="t" style="left:241.31px;top:426px;font-size:12px;color:#ff00ff;font-weight:normal;transform:scaleX(0.9083);">Max:</div>
<div class="t" style="left:264.97px;top:428px;font-size:15.7px;color:#ff00ff;font-weight:normal;transform:scaleX(0.9054);">*****</div>
<div class="t" style="left:241.22px;top:438px;font-size:12px;color:#ff00ff;font-weight:normal;">Min:</div>
<div class="t" style="left:264.97px;top:440px;font-size:15.7px;color:#ff00ff;font-weight:normal;transform:scaleX(0.9054);">*****</div>
<div class="mbox" style="left:316px;top:398px;width:128px;height:55px"></div>
<svg class="a" style="left:316px;top:398px" width="128" height="55" viewBox="316 398 128 55"><path d="M334 440.6 H339.1 V420.5 H351.6 V440.6 H358.5 V420.5 H363.8" stroke="#fff" stroke-width="1.2" fill="none"/><path d="M336.8 430.4 H341.6 M349.3 430.4 H354.1" stroke="#ff00ff" stroke-width="1.2" fill="none"/><path d="M340.5 444.4 H350.5" stroke="#ff00ff" stroke-width="1.2" fill="none"/><path d="M338.8 444.4 L342 442.2 V446.6 Z M352.2 444.4 L349 442.2 V446.6 Z" fill="#ff00ff"/></svg>
<div class="t" style="left:318.07px;top:401px;font-size:13.1px;color:#ff00ff;font-weight:normal;transform:scaleX(0.8573);">+Duty</div>
<div class="a" style="left:319.2px;top:415.4px;width:12.8px;height:12.2px;border-radius:2.5px;background:#ff06ff;box-shadow:0 0 1.6px 1px #a800a8"></div>
<div class="t" style="left:322.47px;top:415px;font-size:13.1px;color:#160016;font-weight:normal;transform:scaleX(0.8656);">3</div>
<div class="t" style="left:369.60px;top:402px;font-size:12px;color:#ff00ff;font-weight:normal;">Cur:</div>
<div class="t" style="left:392.97px;top:404px;font-size:15.7px;color:#ff00ff;font-weight:normal;transform:scaleX(0.9054);">*****</div>
<div class="t" style="left:370.10px;top:414px;font-size:12px;color:#ff00ff;font-weight:normal;">Avg:</div>
<div class="t" style="left:392.97px;top:416px;font-size:15.7px;color:#ff00ff;font-weight:normal;transform:scaleX(0.9054);">*****</div>
<div class="t" style="left:369.31px;top:426px;font-size:12px;color:#ff00ff;font-weight:normal;transform:scaleX(0.9083);">Max:</div>
<div class="t" style="left:392.97px;top:428px;font-size:15.7px;color:#ff00ff;font-weight:normal;transform:scaleX(0.9054);">*****</div>
<div class="t" style="left:369.23px;top:438px;font-size:12px;color:#ff00ff;font-weight:normal;">Min:</div>
<div class="t" style="left:392.97px;top:440px;font-size:15.7px;color:#ff00ff;font-weight:normal;transform:scaleX(0.9054);">*****</div>
<div class="mbox" style="left:444px;top:398px;width:128px;height:55px"></div>
<svg class="a" style="left:444px;top:398px" width="128" height="55" viewBox="444 398 128 55"><path d="M463 437.4 H470.5 V421.6 H483.7 V437.4 H491" stroke="#fff" stroke-width="1.2" fill="none"/><path d="M468 429.6 H472.6 M481.4 429.6 H486" stroke="#ff00ff" stroke-width="1.2" fill="none"/><path d="M472 441 H482" stroke="#ff00ff" stroke-width="1.2" fill="none"/><path d="M470.3 441 L473.5 438.8 V443.2 Z M483.9 441 L480.7 438.8 V443.2 Z" fill="#ff00ff"/></svg>
<div class="t" style="left:445.74px;top:401px;font-size:13.1px;color:#ff00ff;font-weight:normal;transform:scaleX(0.9023);">+Width</div>
<div class="a" style="left:447.2px;top:415.4px;width:12.8px;height:12.2px;border-radius:2.5px;background:#ff06ff;box-shadow:0 0 1.6px 1px #a800a8"></div>
<div class="t" style="left:450.47px;top:415px;font-size:13.1px;color:#160016;font-weight:normal;transform:scaleX(0.8656);">3</div>
<div class="t" style="left:497.59px;top:402px;font-size:12px;color:#ff00ff;font-weight:normal;transform:scaleX(1.0186);">Cur:62.00ns</div>
<div class="t" style="left:498.10px;top:414px;font-size:12px;color:#ff00ff;font-weight:normal;transform:scaleX(0.9936);">Avg:62.00ns</div>
<div class="t" style="left:497.25px;top:426px;font-size:12px;color:#ff00ff;font-weight:normal;transform:scaleX(0.9733);">Max:62.00ns</div>
<div class="t" style="left:497.20px;top:438px;font-size:12px;color:#ff00ff;font-weight:normal;transform:scaleX(1.0246);">Min:62.00ns</div>
<div class="mbox" style="left:572px;top:398px;width:128px;height:55px"></div>
<svg class="a" style="left:572px;top:398px" width="128" height="55" viewBox="572 398 128 55"><path d="M597 422.5 H620 M597 444.5 H620" stroke="#ff00ff" stroke-width="1" stroke-dasharray="1 1" fill="none"/><path d="M597 443.8 L599 443.3 L600.5 444.6 L603 444.4 L603.8 423.5 L604.8 421.6 L606.5 423 L608 422.4 L611 422.6 L611.8 443 L613 443.8 L615 443 L616.5 444.6 L618.5 444.2" stroke="#fff" stroke-width="1.2" fill="none"/><path d="M592.8 425 V442" stroke="#ff00ff" stroke-width="1.2" fill="none"/><path d="M590.4 425.8 L592.8 422 L595.2 425.8 Z M590.4 441.2 L592.8 445 L595.2 441.2 Z" fill="#ff00ff"/></svg>
<div class="t" style="left:573.60px;top:401px;font-size:13.1px;color:#ff00ff;font-weight:normal;transform:scaleX(0.9254);">Ampl</div>
<div class="a" style="left:575.2px;top:415.4px;width:12.8px;height:12.2px;border-radius:2.5px;background:#ff06ff;box-shadow:0 0 1.6px 1px #a800a8"></div>
<div class="t" style="left:578.47px;top:415px;font-size:13.1px;color:#160016;font-weight:normal;transform:scaleX(0.8656);">3</div>
<div class="t" style="left:625.61px;top:402px;font-size:12px;color:#ff00ff;font-weight:normal;transform:scaleX(0.9864);">Cur:1.83 V</div>
<div class="t" style="left:626.10px;top:414px;font-size:12px;color:#ff00ff;font-weight:normal;transform:scaleX(0.9658);">Avg:1.83 V</div>
<div class="t" style="left:625.28px;top:426px;font-size:12px;color:#ff00ff;font-weight:normal;transform:scaleX(0.9370);">Max:1.83 V</div>
<div class="t" style="left:625.23px;top:438px;font-size:12px;color:#ff00ff;font-weight:normal;transform:scaleX(0.9929);">Min:1.83 V</div>
<svg class="a" style="left:0;top:453px" width="800" height="27" viewBox="0 453 800 27"><defs><pattern id="h1" width="3.54" height="3.54" patternUnits="userSpaceOnUse" patternTransform="rotate(45)"><rect width="3.54" height="3.54" fill="#222204"/><rect width="3.54" height="0.9" fill="#4c4c1e"/></pattern><pattern id="h2" width="3.54" height="3.54" patternUnits="userSpaceOnUse" patternTransform="rotate(45)"><rect width="3.54" height="3.54" fill="#022a2a"/><rect width="3.54" height="0.9" fill="#1c4a4a"/></pattern><pattern id="h4" width="3.54" height="3.54" patternUnits="userSpaceOnUse" patternTransform="rotate(45)"><rect width="3.54" height="3.54" fill="#04182a"/><rect width="3.54" height="0.9" fill="#1a3450"/></pattern></defs><path d="M0 454 H113 L100.5 480 H0 Z" fill="url(#h1)"/><path d="M29.5 456 H110.2 L99.8 477.8 H19 Z" fill="#000"/><path d="M116.7 454 H230.5 L218 480 H104.2 Z" fill="url(#h2)"/><path d="M146.8 456 H227.5 L217 477.8 H136.3 Z" fill="#000"/><path d="M233.7 454 H347 L334.5 480 H221.2 Z" fill="#ff00ff"/><path d="M264.3 456.6 H343.8 L333.6 477.8 H254.1 Z" fill="#000"/><path d="M349.5 454 H464 L451.5 480 H337 Z" fill="url(#h4)"/><path d="M381 456 H461 L450.5 477.8 H370.5 Z" fill="#000"/><path d="M700 480 L712.3 454.5 H800" fill="none" stroke="#505050" stroke-width="1"/></svg>
<div class="t" style="left:5.67px;top:457px;font-size:21.8px;color:#8a8a8a;font-weight:normal;transform:scaleX(0.6301);">1</div>
<svg class="a" style="left:32px;top:462px" width="8" height="6" viewBox="0 0 8 6" shape-rendering="crispEdges"><line x1="0" y1="0.5" x2="7" y2="0.5" stroke="#909090"/><line x1="0" y1="4.5" x2="7" y2="4.5" stroke="#909090" stroke-dasharray="1 1"/></svg>
<div class="t" style="left:52.35px;top:461px;font-size:13.1px;color:#909090;font-weight:normal;transform:scaleX(0.8924);">5.00 V</div>
<div class="t" style="left:120.01px;top:457px;font-size:21.8px;color:#8a8a8a;font-weight:normal;transform:scaleX(0.9854);">2</div>
<svg class="a" style="left:148px;top:462px" width="8" height="6" viewBox="0 0 8 6" shape-rendering="crispEdges"><line x1="0" y1="0.5" x2="7" y2="0.5" stroke="#909090"/><line x1="0" y1="4.5" x2="7" y2="4.5" stroke="#909090" stroke-dasharray="1 1"/></svg>
<div class="t" style="left:168.55px;top:461px;font-size:13.1px;color:#909090;font-weight:normal;transform:scaleX(0.8924);">5.00 V</div>
<div class="t" style="left:237.36px;top:457px;font-size:21.8px;color:#000;font-weight:normal;transform:scaleX(0.8552);">3</div>
<svg class="a" style="left:265px;top:462px" width="8" height="6" viewBox="0 0 8 6" shape-rendering="crispEdges"><line x1="0" y1="0.5" x2="7" y2="0.5" stroke="#ff00ff"/><line x1="0" y1="4.5" x2="7" y2="4.5" stroke="#ff00ff" stroke-dasharray="1 1"/></svg>
<div class="t" style="left:285.84px;top:461px;font-size:13.1px;color:#ff00ff;font-weight:normal;transform:scaleX(0.9306);">500mV</div>
<div class="t" style="left:354.55px;top:457px;font-size:21.8px;color:#707070;font-weight:normal;transform:scaleX(0.9070);">4</div>
<svg class="a" style="left:382px;top:462px" width="8" height="6" viewBox="0 0 8 6" shape-rendering="crispEdges"><line x1="0" y1="0.5" x2="7" y2="0.5" stroke="#808080"/><line x1="0" y1="4.5" x2="7" y2="4.5" stroke="#808080" stroke-dasharray="1 1"/></svg>
<div class="t" style="left:402.11px;top:461px;font-size:13.1px;color:#808080;font-weight:normal;transform:scaleX(0.8936);">1.00 V</div>
<svg class="a" style="left:738px;top:458px" width="24" height="16" viewBox="738 458 24 16"><path d="M742 466.4 H758" stroke="#fff" stroke-width="1.3" fill="none"/><rect x="739.8" y="464" width="3.4" height="4.9" rx="0.8" fill="#fff"/><path d="M760.4 466.4 L756.8 464.2 V468.6 Z" fill="#fff"/><path d="M745.2 466.2 C747.5 463.2,748.5 462.4,752.5 462.4" stroke="#fff" stroke-width="1.2" fill="none"/><circle cx="753.3" cy="462.4" r="1.5" fill="#fff"/><path d="M747.5 466.8 C749.5 469.5,750.5 470.5,753.5 470.6" stroke="#fff" stroke-width="1.2" fill="none"/><rect x="753.2" y="468.9" width="3" height="3.1" fill="#fff"/></svg>
<svg class="a" style="left:763px;top:455px" width="24" height="20" viewBox="763 455 24 20"><path d="M773.6 457.6 L765.6 464 Q765 465,765.6 466 L773.6 472.4 Q774.3 472.8,774.3 472 V458 Q774.3 457.2,773.6 457.6 Z" stroke="#fff" stroke-width="1.2" fill="none" stroke-linejoin="round"/><path d="M775.6 457 V473" stroke="#fff" stroke-width="1.1" fill="none"/><path d="M771.6 463.6 A1.6 1.6 0 0 1 771.6 466.4" stroke="#fff" stroke-width="1" fill="none"/><path d="M777 462 L783.8 469 M783.8 462 L777 469" stroke="#c8c8c8" stroke-width="0.9" fill="none"/></svg>
</div>
</body></html>
